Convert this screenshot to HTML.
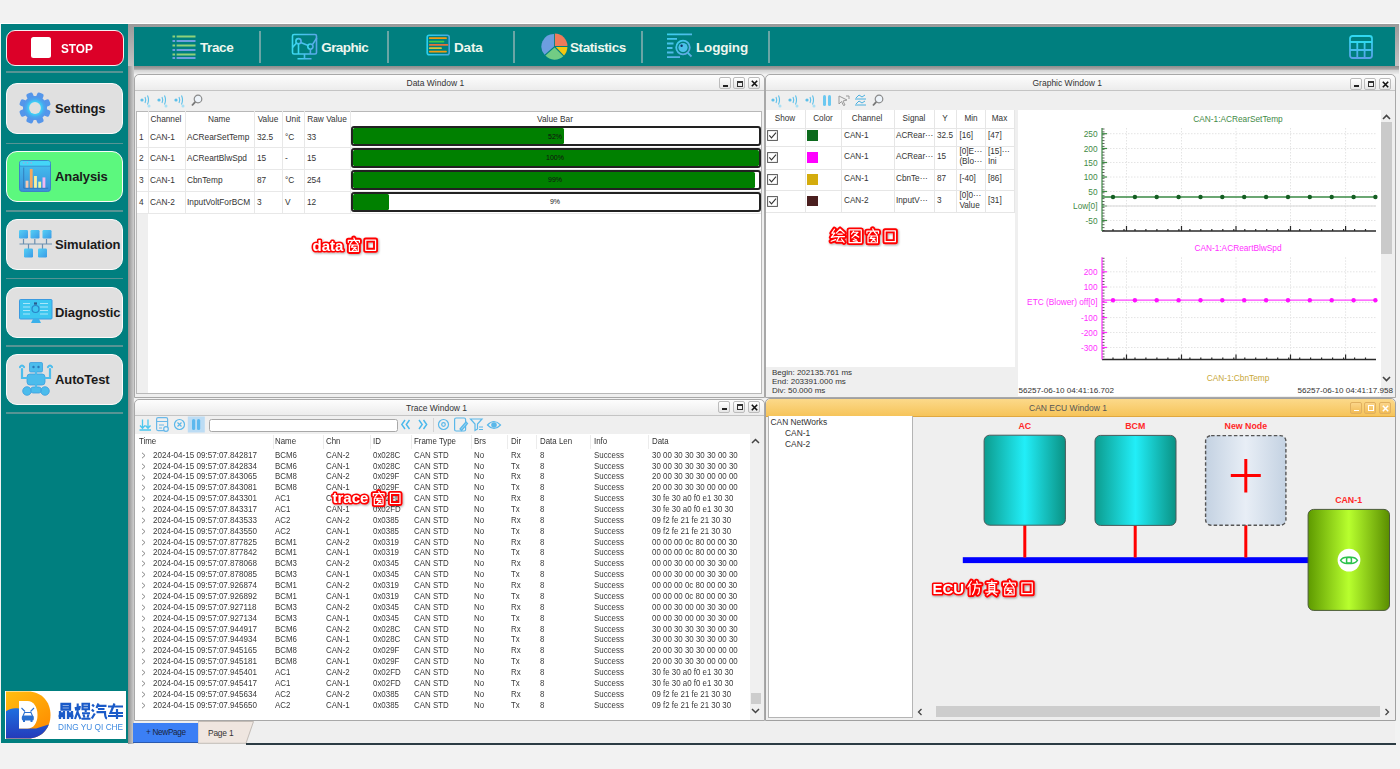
<!DOCTYPE html>
<html><head><meta charset="utf-8">
<style>
*{box-sizing:border-box;margin:0;padding:0}
html,body{width:1400px;height:769px;overflow:hidden;background:#f2f2f2;font-family:"Liberation Sans",sans-serif;position:relative}
.a{position:absolute}
.t{position:absolute;white-space:nowrap;line-height:1}
/* sidebar */
#side{left:1px;top:24px;width:127px;height:719px;background:#007f7f}
.sep{position:absolute;left:6px;width:117px;height:1.6px;background:#579494}
.sbtn{position:absolute;left:6px;width:117px;height:51px;border-radius:11px;background:#e0e0e0;border:1.5px solid #fbfbfb}
.sbtn .lbl{position:absolute;left:48px;top:17px;font-size:13px;font-weight:bold;color:#1a1a1a;letter-spacing:-0.1px}
/* toolbar */
#tbshadow{left:128px;top:24px;width:1271px;height:47px;background:linear-gradient(#9a9a9a,#c8c8c8)}
#tb{left:134px;top:27px;width:1261px;height:39px;background:#007f7f}
.tsep{position:absolute;top:4px;width:2px;height:32px;background:#6aa5a5}
.tl{position:absolute;top:13px;font-size:13.5px;font-weight:bold;color:#eef6ee}
/* windows */
.win{position:absolute;background:#efefef;border:1px solid #a8a8a8;border-radius:5px 5px 0 0}
.ttl{position:absolute;left:0;top:0;right:0;height:16px;background:linear-gradient(#fdfdfd,#ececec);border-bottom:1px solid #c4c4c4;border-radius:5px 5px 0 0}
.ttx{position:absolute;top:4px;font-size:8.5px;color:#333}
.wb{position:absolute;top:2px;width:12px;height:12px;border:1px solid #bcbcbc;border-radius:2px;background:linear-gradient(#fff,#e6e6e6)}
.g{font-size:8.5px;color:#333}
.sx{transform:scaleX(.85);transform-origin:0 0}
</style></head>
<body>
<!-- white line under top strip -->
<div class="a" style="left:0;top:23px;width:1400px;height:1px;background:#fff"></div>

<!-- SIDEBAR -->
<div id="side" class="a">
  <!-- STOP -->
  <div class="a" style="left:5px;top:5.5px;width:117.5px;height:36px;border-radius:9px;background:#dc0028;border:1.5px solid #f6f0f0"></div>
  <div class="a" style="left:29.5px;top:13px;width:20.5px;height:21px;border-radius:2.5px;background:#fff"></div>
  <div class="t" style="left:60px;top:17.5px;font-size:13.5px;font-weight:bold;color:#fff;transform:scaleX(.87);transform-origin:0 0">STOP</div>
  <div class="sep" style="top:47px;left:5px"></div>
  <div class="sep" style="top:118.5px;left:5px"></div>
  <div class="sep" style="top:186px;left:5px"></div>
  <div class="sep" style="top:253.5px;left:5px"></div>
  <div class="sep" style="top:321px;left:5px"></div>
  <div class="sep" style="top:388px;left:5px"></div>

  <!-- Settings -->
  <div class="sbtn" style="top:59px;left:5px">
    <svg class="a" style="left:10.5px;top:7px" width="34" height="34" viewBox="0 0 34 34">
      <defs><radialGradient id="gg" cx="50%" cy="50%" r="50%"><stop offset="0.42" stop-color="#38e2fa"/><stop offset="0.75" stop-color="#4aa6ee"/><stop offset="1" stop-color="#5294ea"/></radialGradient></defs>
      <g fill="#5596ea" transform="rotate(22.5 17 17)">
        <rect x="13.6" y="1" width="6.8" height="32" rx="2"/>
        <rect x="13.6" y="1" width="6.8" height="32" rx="2" transform="rotate(45 17 17)"/>
        <rect x="13.6" y="1" width="6.8" height="32" rx="2" transform="rotate(90 17 17)"/>
        <rect x="13.6" y="1" width="6.8" height="32" rx="2" transform="rotate(135 17 17)"/>
      </g>
      <circle cx="17" cy="17" r="12" fill="url(#gg)"/>
      <circle cx="17" cy="17" r="5.9" fill="#e0e0e0"/>
    </svg>
    <div class="lbl" style="top:17px">Settings</div>
  </div>

  <!-- Analysis -->
  <div class="sbtn" style="top:127px;left:5px;background:#5cf87e">
    <svg class="a" style="left:12px;top:7.5px" width="32" height="32" viewBox="0 0 34 34">
      <defs><linearGradient id="ag" x1="0" y1="0" x2="0" y2="1"><stop offset="0" stop-color="#45c4f2"/><stop offset="1" stop-color="#3a8fd8"/></linearGradient></defs>
      <rect x="0.5" y="0.5" width="33" height="33" rx="3" fill="url(#ag)" stroke="#3a7fc8" stroke-width="1"/>
      <rect x="1" y="1" width="32" height="5.5" rx="2" fill="#44d6f8"/><rect x="1" y="6" width="32" height="1.2" fill="#3a9ad8"/>
      <circle cx="5" cy="3" r="0.9" fill="#9ad"/><circle cx="9" cy="3" r="0.9" fill="#9ad"/><circle cx="13" cy="3" r="0.9" fill="#9ad"/>
      <path d="M5 8 V30 H31" stroke="#2e6fb0" stroke-width="0.8" fill="none"/>
      <rect x="7" y="22" width="3" height="7.5" fill="#f7c9b0"/>
      <rect x="11.5" y="9.5" width="3" height="20" fill="#f5a860"/>
      <rect x="16" y="17" width="3" height="12.5" fill="#f6f0a0"/>
      <rect x="20.5" y="23" width="3" height="6.5" fill="#e8f7a0"/>
      <rect x="25" y="18.5" width="3" height="11" fill="#f0b8f0"/>
    </svg>
    <div class="lbl" style="top:17px">Analysis</div>
  </div>

  <!-- Simulation -->
  <div class="sbtn" style="top:194.5px;left:5px">
    <svg class="a" style="left:12px;top:10px" width="34" height="30" viewBox="0 0 34 30">
      <defs><linearGradient id="sg" x1="0" y1="0" x2="1" y2="1"><stop offset="0" stop-color="#55d0f5"/><stop offset="1" stop-color="#3a9ae6"/></linearGradient></defs>
      <g stroke="#6a8fb0" stroke-width="1.2" fill="none">
        <path d="M0.5 14 H33"/>
        <path d="M4.5 9 V14 M15.8 9 V14 M27.5 9 V14 M9.5 14 V19 M23.5 14 V19"/>
      </g>
      <g fill="url(#sg)">
        <rect x="0" y="0" width="9" height="8.5" rx="1.2"/>
        <rect x="11.5" y="0" width="9" height="8.5" rx="1.2"/>
        <rect x="23.5" y="0" width="9" height="8.5" rx="1.2"/>
        <rect x="5" y="18.5" width="9" height="9" rx="1.2"/>
        <rect x="19" y="18.5" width="9" height="9" rx="1.2"/>
      </g>
    </svg>
    <div class="lbl" style="top:17px">Simulation</div>
  </div>

  <!-- Diagnostic -->
  <div class="sbtn" style="top:262.5px;left:5px">
    <svg class="a" style="left:12px;top:11px" width="34" height="26" viewBox="0 0 34 26">
      <rect x="0.5" y="0.5" width="32.5" height="19.5" rx="1" fill="#3cc6f0" stroke="#3a9ae0" stroke-width="1"/>
      <g stroke="#a8e6fa" stroke-width="1.2">
        <path d="M4 4.5 H11 M4 8 H11 M4 11.5 H11 M4 15 H11 M21 4.5 H29 M21 8 H29 M21 11.5 H29 M21 15 H29"/>
      </g>
      <circle cx="16.5" cy="10" r="3.5" fill="none" stroke="#2a86c8" stroke-width="1.2"/>
      <path d="M15 4 h3 M15 5 h3" stroke="#225" stroke-width="0.8"/>
      <path d="M14 20 L12 24 H22 L20 20 Z" fill="#3ab0ea"/>
    </svg>
    <div class="lbl" style="top:17px">Diagnostic</div>
  </div>

  <!-- AutoTest -->
  <div class="sbtn" style="top:330px;left:5px">
    <svg class="a" style="left:12px;top:7px" width="34" height="35" viewBox="0 0 34 35">
      <g fill="#4cbcec" stroke="#3a9ee0" stroke-width="0.8">
        <rect x="10.5" y="0.5" width="13" height="9.5" rx="1.2"/>
        <rect x="8" y="12" width="18" height="11" rx="3"/>
        <circle cx="8" cy="29" r="4.3"/>
        <circle cx="26" cy="29" r="4.3"/>
        <rect x="12" y="25" width="10" height="6" rx="2"/>
      </g>
      <g stroke="#4cbcec" stroke-width="2.2" fill="none" stroke-linecap="round">
        <path d="M8 16 L3 16 L3 7"/><path d="M26 16 L31 16 L31 7"/>
        <path d="M1 5 Q3 2 5 5"/><path d="M29 5 Q31 2 33 5"/>
        <path d="M17 10 V12"/><path d="M17 23 V25"/>
      </g>
      <circle cx="14.5" cy="5" r="1.2" fill="#2a78b8"/><circle cx="19.5" cy="5" r="1.2" fill="#2a78b8"/>
    </svg>
    <div class="lbl" style="top:17px">AutoTest</div>
  </div>

  <!-- Logo -->
  <svg class="a" style="left:4px;top:667px" width="121" height="48" viewBox="5 691 121 48">
    <defs>
      <linearGradient id="lo" x1="0" y1="0" x2="0.7" y2="1"><stop offset="0" stop-color="#ffbe10"/><stop offset="1" stop-color="#ff8c00"/></linearGradient>
      <linearGradient id="lb" x1="0" y1="0" x2="0" y2="1"><stop offset="0" stop-color="#1f6fe0"/><stop offset="1" stop-color="#2438b8"/></linearGradient>
    </defs>
    <rect x="5" y="691" width="121" height="48" fill="#fff"/>
    <path d="M6 691.5 H28 C41 691.5 50.5 701 50.5 715 C50.5 729 41 738.5 28 738.5 H6 Z" fill="url(#lo)"/>
    <clipPath id="dclip"><path d="M6 691.5 H28 C41 691.5 50.5 701 50.5 715 C50.5 729 41 738.5 28 738.5 H6 Z"/></clipPath><path clip-path="url(#dclip)" d="M5 739 V712 C9 708.5 14 707.5 19 708.5 V728.6 H36 L52 723.5 V740 Z" fill="url(#lb)"/>
    <path d="M19 701 H27.5 C33.5 701 37.5 707 37.5 715 C37.5 723 33.5 728.6 27.5 728.6 H19 Z" fill="#fff"/>
    <g stroke="#2a70d0" stroke-width="1.1" fill="none">
      <path d="M21.5 708 L25 711.5 M34 708 L30.5 711.5"/>
      <path d="M23 716 L24.5 712.5 H31 L32.5 716"/>
    </g>
    <rect x="21.8" y="715.5" width="12" height="5" rx="1.5" fill="#2a70d0"/>
    <rect x="23" y="720" width="2" height="2" fill="#2a70d0"/><rect x="30.5" y="720" width="2" height="2" fill="#2a70d0"/>
    <g stroke="#1a5ac8" stroke-width="2.3" fill="none" transform="translate(58,703) scale(1)">
      <path d="M3.5 0.8 H12 V6.5 H3.5 Z M3.5 3.6 H12 M2 8 V16 M2 10.5 H6 M6 8 V16 M14 8 V16 M10 10.5 H14 M10 8 V16 M0.5 13 H6 M10 13 H15.5"/>
    </g>
    <g stroke="#1a5ac8" stroke-width="2.1" fill="none" transform="translate(74.5,703)">
      <path d="M1 4 L1.8 7.5 M5.5 3 L4.5 7 M3.2 0.5 V8 L0.5 16 M3.2 9.5 L6 16 M8 0.8 H14.5 V6.2 H8 Z M8 3.5 H14.5 M11.2 7 V9 M7.5 10.2 H15.5 M9 11.5 L10 14.5 M14 11.5 L13 14.5 M7 15.8 H16"/>
    </g>
    <g stroke="#1a5ac8" stroke-width="2.2" fill="none" transform="translate(91,703)">
      <path d="M1.2 1.5 L3 3.5 M0.8 6.5 L2.8 8.5 M0.8 15.5 L3.8 10.5 M7.5 0.5 L5.5 5 M7 2.8 H15.5 M7 6 H13.5 M5.5 9.2 H14 Q14 15 16 15.5"/>
    </g>
    <g stroke="#1a5ac8" stroke-width="2.2" fill="none" transform="translate(107.5,703)">
      <path d="M0.5 3.5 H15.5 M7 0.5 L3 10 H15.5 M9.5 6 V16 M0.5 13 H15.5"/>
    </g>
  </svg>
  <div class="t" style="left:57px;top:698.5px;font-size:9.2px;color:#3f8ae0;transform:scaleX(.9);transform-origin:0 0">DING YU QI CHE</div>
</div>

<!-- TOOLBAR -->
<div id="tbshadow" class="a"></div>
<div id="tb" class="a">
  <div class="tsep" style="left:125px"></div>
  <div class="tsep" style="left:253px"></div>
  <div class="tsep" style="left:379px"></div>
  <div class="tsep" style="left:507px"></div>
  <div class="tsep" style="left:634px"></div>
  <!-- trace icon -->
  <svg class="a" style="left:38px;top:8px" width="24" height="24" viewBox="0 0 24 24">
    <g stroke-width="2">
      <path d="M0.5 1.4 h2.6 M4.6 1.4 H23.5" stroke="#8fd27a"/>
      <path d="M0.5 6 h2.6 M4.6 6 H23.5" stroke="#6f9fe0"/>
      <path d="M0.5 10.6 h2.6 M4.6 10.6 H23.5" stroke="#8fd27a"/>
      <path d="M0.5 15.1 h2.6 M4.6 15.1 H23.5" stroke="#6f9fe0"/>
      <path d="M0.5 19.6 h2.6 M4.6 19.6 H23.5" stroke="#8fd27a"/>
      <path d="M0.5 24.1 h2.6 M4.6 24.1 H23.5" stroke="#6f9fe0" transform="translate(0,-1)"/>
    </g>
  </svg>
  <div class="tl" style="left:66px;letter-spacing:-0.4px">Trace</div>
  <!-- graphic icon -->
  <svg class="a" style="left:157px;top:6px" width="27" height="27" viewBox="0 0 27 27">
    <defs><linearGradient id="gi" x1="0" y1="0" x2="1" y2="0"><stop offset="0" stop-color="#3ad8f0"/><stop offset="1" stop-color="#5aa8e8"/></linearGradient></defs>
    <g stroke="url(#gi)" stroke-width="1.6" fill="none">
      <rect x="1.5" y="1.5" width="24" height="19.5" rx="1.5"/>
      <path d="M13.5 21 V25.5 M6.5 25.8 H20.5"/>
      <path d="M1.5 14.4 L5.6 10 M9.6 9.6 L17.2 12.6 M21.4 11.6 L25.8 5"/>
      <circle cx="7.5" cy="8.2" r="2.6"/>
      <circle cx="19.4" cy="13.6" r="2.6"/>
      <path d="M7.5 10.8 V21 M19.4 16.2 V21"/>
    </g>
  </svg>
  <div class="tl" style="left:187.3px;letter-spacing:-0.6px">Graphic</div>
  <!-- data icon -->
  <svg class="a" style="left:292px;top:7px" width="25" height="27" viewBox="0 0 25 27">
    <defs><linearGradient id="di" x1="0" y1="0" x2="1" y2="0"><stop offset="0" stop-color="#2ad0f0"/><stop offset="1" stop-color="#4aa8e0"/></linearGradient></defs>
    <rect x="1.2" y="1.2" width="22" height="19.5" rx="2" fill="none" stroke="url(#di)" stroke-width="1.6"/>
    <path d="M1 24 H24" stroke="url(#di)" stroke-width="1.8"/>
    <g stroke-width="1.8" stroke-linecap="round">
      <path d="M3.8 4.2 H20" stroke="#f29a10"/>
      <path d="M3.8 7.6 H17.5" stroke="#42c84a"/>
      <path d="M3.8 10.9 H21.5" stroke="#e8703a"/>
      <path d="M3.8 14.2 H15" stroke="#d8c43a"/>
      <path d="M3.8 17.6 H20" stroke="#f29a10"/>
    </g>
  </svg>
  <div class="tl" style="left:320px;letter-spacing:-0.15px">Data</div>
  <!-- statistics pie -->
  <svg class="a" style="left:407px;top:6px" width="27" height="27" viewBox="0 0 27 27">
    <path d="M13 13.5 L13 1 A12.5 12.5 0 0 0 3.6 21.8 Z" fill="#6c9ee0"/>
    <path d="M13.9 13 L13.9 0.5 A12.5 12.5 0 0 1 26.4 13 Z" fill="#f07a5a"/>
    <path d="M14.8 14 L26.4 14 A12.5 12.5 0 0 1 23 22.4 Z" fill="#f5c810"/>
    <path d="M13.6 14.5 L22.3 23.2 A12.5 12.5 0 0 1 4.4 22.6 Z" fill="#72cc84"/>
  </svg>
  <div class="tl" style="left:436px;letter-spacing:-0.42px">Statistics</div>
  <!-- logging icon -->
  <svg class="a" style="left:532px;top:6px" width="28" height="27" viewBox="0 0 28 27">
    <defs><linearGradient id="li" x1="0" y1="0" x2="1" y2="1"><stop offset="0" stop-color="#3ad0f0"/><stop offset="1" stop-color="#6aa0e0"/></linearGradient></defs>
    <g stroke="url(#li)" stroke-width="1.8" fill="none">
      <path d="M1 1.3 H26 M1 5.8 H11 M1 10.5 H7.5 M1 15 H6.5 M1 19.5 H7.5 M1 24.2 H14"/>
      <circle cx="17" cy="14.5" r="6.8"/>
      <path d="M21.8 19.8 L25.5 23.5"/>
    </g>
    <circle cx="17" cy="14.5" r="4.6" fill="#4cc0ea"/>
    <circle cx="15.6" cy="12.8" r="1.2" fill="#136"/>
  </svg>
  <div class="tl" style="left:562px;letter-spacing:-0.18px">Logging</div>
  <!-- table icon right -->
  <svg class="a" style="left:1215px;top:8px" width="24" height="24" viewBox="0 0 24 24">
    <defs><linearGradient id="ti" x1="0" y1="0" x2="0" y2="1"><stop offset="0" stop-color="#30d8f0"/><stop offset="1" stop-color="#5aa0e8"/></linearGradient></defs>
    <g stroke="url(#ti)" stroke-width="1.8" fill="none">
      <rect x="1" y="1" width="22" height="22" rx="2.5"/>
      <path d="M1 7 H23 M1 15 H23 M8.3 7 V23 M15.6 7 V23"/>
    </g>
  </svg>
</div>

<!-- gap shadow between sidebar and windows -->
<div class="a" style="left:128px;top:66px;width:6px;height:678px;background:linear-gradient(90deg,#8f8f8f,#cfcfcf)"></div>
<div class="a" style="left:134px;top:66px;width:1265px;height:8px;background:linear-gradient(#8c8c8c 0%,#a8a8a8 40%,#d4d4d4 55%,#ececec 100%)"></div>

<!-- DATA WINDOW -->
<div class="win" style="left:133.5px;top:74px;width:631px;height:323.5px">
  <div class="ttl"></div>
  <div class="t g" style="left:272px;top:4px">Data Window 1</div>
  <div class="wb" style="left:584px"><div class="a" style="left:3px;top:6.5px;width:5px;height:2px;background:#222"></div></div>
  <div class="wb" style="left:598.5px"><div class="a" style="left:2.5px;top:2.5px;width:6px;height:6px;border:1.3px solid #333;border-top-width:2px"></div></div>
  <div class="wb" style="left:613px"><svg class="a" style="left:2px;top:2px" width="7" height="7"><path d="M0.8 0.8 L6.2 6.2 M6.2 0.8 L0.8 6.2" stroke="#111" stroke-width="1.6"/></svg></div>
</div>
<svg class="a" style="left:140px;top:94px" width="64" height="14" viewBox="0 0 64 14">
  <g transform="translate(0,0)" fill="none" stroke="#5cc0ea" stroke-width="1.1"><circle cx="2" cy="6" r="1.6" fill="#5cc0ea" stroke="none"/><path d="M5 3 Q6.5 6 5 9 M7.5 1.5 Q9.5 6 7.5 10.5"/><circle cx="9" cy="12" r="1.5" fill="#a8e0f5" stroke="none"/></g>
  <g transform="translate(17,0)" fill="none" stroke="#5cc0ea" stroke-width="1.1"><circle cx="2" cy="6" r="1.6" fill="#5cc0ea" stroke="none"/><path d="M5 3 Q6.5 6 5 9 M7.5 1.5 Q9.5 6 7.5 10.5"/><circle cx="9" cy="12" r="1.5" fill="#a8e0f5" stroke="none"/></g>
  <g transform="translate(34,0)" fill="none" stroke="#5cc0ea" stroke-width="1.1"><circle cx="2" cy="6" r="1.6" fill="#5cc0ea" stroke="none"/><path d="M5 3 Q6.5 6 5 9 M7.5 1.5 Q9.5 6 7.5 10.5"/><circle cx="9" cy="12" r="1.5" fill="#a8e0f5" stroke="none"/></g>
  <g transform="translate(51,0)"><circle cx="7" cy="5" r="3.8" fill="#eef4fa" stroke="#8a8a8a" stroke-width="1.2"/><path d="M4.3 7.8 L1 11.5" stroke="#777" stroke-width="1.8"/></g>
</svg>
<div class="a" style="left:136px;top:110.5px;width:625.5px;height:283px;background:#fff;border:1px solid #b8b8b8"></div>
<div class="a" style="left:137px;top:212.5px;width:10.5px;height:180.5px;background:#efefef"></div>
<div class="a" style="left:147.5px;top:111px;width:1px;height:101.5px;background:#e8e8e8"></div>
<div class="a" style="left:184.5px;top:111px;width:1px;height:101.5px;background:#e8e8e8"></div>
<div class="a" style="left:254px;top:111px;width:1px;height:101.5px;background:#e8e8e8"></div>
<div class="a" style="left:282px;top:111px;width:1px;height:101.5px;background:#e8e8e8"></div>
<div class="a" style="left:304px;top:111px;width:1px;height:101.5px;background:#e8e8e8"></div>
<div class="a" style="left:350px;top:111px;width:1px;height:101.5px;background:#e8e8e8"></div>
<div class="a" style="left:137px;top:147px;width:624px;height:1px;background:#e8e8e8"></div>
<div class="a" style="left:137px;top:169px;width:624px;height:1px;background:#e8e8e8"></div>
<div class="a" style="left:137px;top:191px;width:624px;height:1px;background:#e8e8e8"></div>
<div class="a" style="left:137px;top:212.5px;width:624px;height:1px;background:#e8e8e8"></div>
<div class="t g" style="left:106px;width:120px;text-align:center;top:114.5px;font-size:8.3px">Channel</div>
<div class="t g" style="left:159px;width:120px;text-align:center;top:114.5px;font-size:8.3px">Name</div>
<div class="t g" style="left:208px;width:120px;text-align:center;top:114.5px;font-size:8.3px">Value</div>
<div class="t g" style="left:233px;width:120px;text-align:center;top:114.5px;font-size:8.3px">Unit</div>
<div class="t g" style="left:267px;width:120px;text-align:center;top:114.5px;font-size:8.3px">Raw Value</div>
<div class="t g" style="left:495px;width:120px;text-align:center;top:114.5px;font-size:8.3px">Value Bar</div>
<div class="t g" style="left:139px;top:132.5px;font-size:8.3px">1</div>
<div class="t g" style="left:150px;top:132.5px;font-size:8.3px">CAN-1</div>
<div class="t g" style="left:187px;top:132.5px;font-size:8.3px">ACRearSetTemp</div>
<div class="t g" style="left:257px;top:132.5px;font-size:8.3px">32.5</div>
<div class="t g" style="left:285px;top:132.5px;font-size:8.3px">°C</div>
<div class="t g" style="left:307px;top:132.5px;font-size:8.3px">33</div>
<div class="a" style="left:350.5px;top:126.4px;width:410px;height:20px;border:2px solid #222;border-radius:3px;background:#fff;overflow:hidden"><div class="a" style="left:0;top:0;bottom:0;width:211.5px;background:#008000;border-radius:1.5px"></div></div>
<div class="t" style="left:505px;width:100px;text-align:center;top:133.0px;font-size:7px;color:#111">52%</div>
<div class="t g" style="left:139px;top:153.5px;font-size:8.3px">2</div>
<div class="t g" style="left:150px;top:153.5px;font-size:8.3px">CAN-1</div>
<div class="t g" style="left:187px;top:153.5px;font-size:8.3px">ACReartBlwSpd</div>
<div class="t g" style="left:257px;top:153.5px;font-size:8.3px">15</div>
<div class="t g" style="left:285px;top:153.5px;font-size:8.3px">-</div>
<div class="t g" style="left:307px;top:153.5px;font-size:8.3px">15</div>
<div class="a" style="left:350.5px;top:148.1px;width:410px;height:20px;border:2px solid #222;border-radius:3px;background:#fff;overflow:hidden"><div class="a" style="left:0;top:0;bottom:0;width:100%;background:#008000;border-radius:1.5px"></div></div>
<div class="t" style="left:505px;width:100px;text-align:center;top:154.0px;font-size:7px;color:#111">100%</div>
<div class="t g" style="left:139px;top:175.5px;font-size:8.3px">3</div>
<div class="t g" style="left:150px;top:175.5px;font-size:8.3px">CAN-1</div>
<div class="t g" style="left:187px;top:175.5px;font-size:8.3px">CbnTemp</div>
<div class="t g" style="left:257px;top:175.5px;font-size:8.3px">87</div>
<div class="t g" style="left:285px;top:175.5px;font-size:8.3px">°C</div>
<div class="t g" style="left:307px;top:175.5px;font-size:8.3px">254</div>
<div class="a" style="left:350.5px;top:170px;width:410px;height:20px;border:2px solid #222;border-radius:3px;background:#fff;overflow:hidden"><div class="a" style="left:0;top:0;bottom:0;width:402.7px;background:#008000;border-radius:1.5px"></div></div>
<div class="t" style="left:505px;width:100px;text-align:center;top:176.0px;font-size:7px;color:#111">99%</div>
<div class="t g" style="left:139px;top:197.5px;font-size:8.3px">4</div>
<div class="t g" style="left:150px;top:197.5px;font-size:8.3px">CAN-2</div>
<div class="t g" style="left:187px;top:197.5px;font-size:8.3px">InputVoltForBCM</div>
<div class="t g" style="left:257px;top:197.5px;font-size:8.3px">3</div>
<div class="t g" style="left:285px;top:197.5px;font-size:8.3px">V</div>
<div class="t g" style="left:307px;top:197.5px;font-size:8.3px">12</div>
<div class="a" style="left:350.5px;top:192px;width:410px;height:20px;border:2px solid #222;border-radius:3px;background:#fff;overflow:hidden"><div class="a" style="left:0;top:0;bottom:0;width:36.6px;background:#008000;border-radius:1.5px"></div></div>
<div class="t" style="left:505px;width:100px;text-align:center;top:198.0px;font-size:7px;color:#111">9%</div>
<!-- GRAPHIC WINDOW -->
<div class="win" style="left:764.5px;top:74px;width:631px;height:323.5px">
  <div class="ttl"></div>
  <div class="t g" style="left:267px;top:4px">Graphic Window 1</div>
  <div class="wb" style="left:584px;top:2.5px"><div class="a" style="left:3px;top:6.5px;width:5px;height:2px;background:#222"></div></div>
  <div class="wb" style="left:598.5px;top:2.5px"><div class="a" style="left:2.5px;top:2.5px;width:6px;height:6px;border:1.3px solid #333;border-top-width:2px"></div></div>
  <div class="wb" style="left:613px;top:2.5px"><svg class="a" style="left:2px;top:2px" width="7" height="7"><path d="M0.8 0.8 L6.2 6.2 M6.2 0.8 L0.8 6.2" stroke="#111" stroke-width="1.6"/></svg></div>
</div>
<svg class="a" style="left:771px;top:94px" width="115" height="14" viewBox="0 0 115 14">
  <g transform="translate(0,0)" fill="none" stroke="#5cc0ea" stroke-width="1.1"><circle cx="2" cy="6" r="1.6" fill="#5cc0ea" stroke="none"/><path d="M5 3 Q6.5 6 5 9 M7.5 1.5 Q9.5 6 7.5 10.5"/><circle cx="9" cy="12" r="1.5" fill="#a8e0f5" stroke="none"/></g>
  <g transform="translate(17,0)" fill="none" stroke="#5cc0ea" stroke-width="1.1"><circle cx="2" cy="6" r="1.6" fill="#5cc0ea" stroke="none"/><path d="M5 3 Q6.5 6 5 9 M7.5 1.5 Q9.5 6 7.5 10.5"/><circle cx="9" cy="12" r="1.5" fill="#a8e0f5" stroke="none"/></g>
  <g transform="translate(34,0)" fill="none" stroke="#5cc0ea" stroke-width="1.1"><circle cx="2" cy="6" r="1.6" fill="#5cc0ea" stroke="none"/><path d="M5 3 Q6.5 6 5 9 M7.5 1.5 Q9.5 6 7.5 10.5"/><circle cx="9" cy="12" r="1.5" fill="#a8e0f5" stroke="none"/></g>
  <g transform="translate(52,1)" fill="#6cc8f0"><rect x="0" y="0" width="3" height="11" rx="1.5"/><rect x="5" y="0" width="3" height="11" rx="1.5"/></g>
  <g transform="translate(67,1)" fill="none" stroke="#999" stroke-width="1"><path d="M1 1 L9 5 L5 6 L7 10 L5.5 10.5 L3.5 6.5 L1 9 Z"/><path d="M8 1 h3 v3"/></g>
  <g transform="translate(84,0)" fill="none" stroke="#4ab0e0" stroke-width="1"><path d="M0 5 h11 M0 11 h11 M1 4 l3 -3 l3 2 l3 -2 M1 10 l3 -3 l3 2 l3 -2"/></g>
  <g transform="translate(101,0)"><circle cx="7" cy="5" r="3.8" fill="#eef4fa" stroke="#8a8a8a" stroke-width="1.2"/><path d="M4.3 7.8 L1 11.5" stroke="#777" stroke-width="1.8"/></g>
</svg>
<div class="a" style="left:765.5px;top:110px;width:249.5px;height:256.5px;background:#fff"></div>
<div class="a" style="left:805.3px;top:110px;width:1px;height:102px;background:#e6e6e6"></div>
<div class="a" style="left:841px;top:110px;width:1px;height:102px;background:#e6e6e6"></div>
<div class="a" style="left:893.6px;top:110px;width:1px;height:102px;background:#e6e6e6"></div>
<div class="a" style="left:934px;top:110px;width:1px;height:102px;background:#e6e6e6"></div>
<div class="a" style="left:956px;top:110px;width:1px;height:102px;background:#e6e6e6"></div>
<div class="a" style="left:985.3px;top:110px;width:1px;height:102px;background:#e6e6e6"></div>
<div class="a" style="left:1013.6px;top:110px;width:1px;height:102px;background:#e6e6e6"></div>
<div class="a" style="left:765.5px;top:127.5px;width:249px;height:1px;background:#e6e6e6"></div>
<div class="a" style="left:765.5px;top:146px;width:249px;height:1px;background:#e6e6e6"></div>
<div class="a" style="left:765.5px;top:168.5px;width:249px;height:1px;background:#e6e6e6"></div>
<div class="a" style="left:765.5px;top:190px;width:249px;height:1px;background:#e6e6e6"></div>
<div class="a" style="left:765.5px;top:212px;width:249px;height:1px;background:#e6e6e6"></div>
<div class="t g" style="left:745px;width:80px;text-align:center;top:114.5px;font-size:8.2px">Show</div>
<div class="t g" style="left:783px;width:80px;text-align:center;top:114.5px;font-size:8.2px">Color</div>
<div class="t g" style="left:827px;width:80px;text-align:center;top:114.5px;font-size:8.2px">Channel</div>
<div class="t g" style="left:874px;width:80px;text-align:center;top:114.5px;font-size:8.2px">Signal</div>
<div class="t g" style="left:905px;width:80px;text-align:center;top:114.5px;font-size:8.2px">Y</div>
<div class="t g" style="left:931px;width:80px;text-align:center;top:114.5px;font-size:8.2px">Min</div>
<div class="t g" style="left:959.5px;width:80px;text-align:center;top:114.5px;font-size:8.2px">Max</div>
<svg class="a" style="left:767px;top:130.2px" width="11" height="11" viewBox="0 0 11 11"><rect x="0.6" y="0.6" width="9.8" height="9.8" fill="#fff" stroke="#555" stroke-width="1"/><path d="M2.3 5.3 L4.5 7.8 L9 2.6" stroke="#333" stroke-width="1.1" fill="none"/></svg>
<div class="a" style="left:807.4px;top:130.39999999999998px;width:11px;height:10.7px;background:#0b6a1c"></div>
<div class="t g" style="left:844px;top:131.7px;font-size:8.2px">CAN-1</div>
<div class="t g" style="left:896px;top:131.7px;font-size:8.2px">ACRear···</div>
<div class="t g" style="left:937px;top:131.7px;font-size:8.2px">32.5</div>
<div class="t g" style="left:959.4px;top:131.7px;font-size:8.2px">[16]</div>
<div class="t g" style="left:988px;top:131.7px;font-size:8.2px">[47]</div>
<svg class="a" style="left:767px;top:151.7px" width="11" height="11" viewBox="0 0 11 11"><rect x="0.6" y="0.6" width="9.8" height="9.8" fill="#fff" stroke="#555" stroke-width="1"/><path d="M2.3 5.3 L4.5 7.8 L9 2.6" stroke="#333" stroke-width="1.1" fill="none"/></svg>
<div class="a" style="left:807.4px;top:151.89999999999998px;width:11px;height:10.7px;background:#ff00ff"></div>
<div class="t g" style="left:844px;top:153.2px;font-size:8.2px">CAN-1</div>
<div class="t g" style="left:896px;top:153.2px;font-size:8.2px">ACRear···</div>
<div class="t g" style="left:937px;top:153.2px;font-size:8.2px">15</div>
<div class="t g" style="left:959.4px;top:148.2px;font-size:8.2px">[0]E···</div>
<div class="t g" style="left:959.4px;top:157.7px;font-size:8.2px">(Blo···</div>
<div class="t g" style="left:988px;top:148.2px;font-size:8.2px">[15]···</div>
<div class="t g" style="left:988px;top:157.7px;font-size:8.2px">Ini</div>
<svg class="a" style="left:767px;top:173.7px" width="11" height="11" viewBox="0 0 11 11"><rect x="0.6" y="0.6" width="9.8" height="9.8" fill="#fff" stroke="#555" stroke-width="1"/><path d="M2.3 5.3 L4.5 7.8 L9 2.6" stroke="#333" stroke-width="1.1" fill="none"/></svg>
<div class="a" style="left:807.4px;top:173.89999999999998px;width:11px;height:10.7px;background:#d4ac0d"></div>
<div class="t g" style="left:844px;top:175.2px;font-size:8.2px">CAN-1</div>
<div class="t g" style="left:896px;top:175.2px;font-size:8.2px">CbnTe···</div>
<div class="t g" style="left:937px;top:175.2px;font-size:8.2px">87</div>
<div class="t g" style="left:959.4px;top:175.2px;font-size:8.2px">[-40]</div>
<div class="t g" style="left:988px;top:175.2px;font-size:8.2px">[86]</div>
<svg class="a" style="left:767px;top:195.6px" width="11" height="11" viewBox="0 0 11 11"><rect x="0.6" y="0.6" width="9.8" height="9.8" fill="#fff" stroke="#555" stroke-width="1"/><path d="M2.3 5.3 L4.5 7.8 L9 2.6" stroke="#333" stroke-width="1.1" fill="none"/></svg>
<div class="a" style="left:807.4px;top:195.79999999999998px;width:11px;height:10.7px;background:#4a1f1f"></div>
<div class="t g" style="left:844px;top:197.1px;font-size:8.2px">CAN-2</div>
<div class="t g" style="left:896px;top:197.1px;font-size:8.2px">InputV···</div>
<div class="t g" style="left:937px;top:197.1px;font-size:8.2px">3</div>
<div class="t g" style="left:959.4px;top:192.1px;font-size:8.2px">[0]0···</div>
<div class="t g" style="left:959.4px;top:201.6px;font-size:8.2px">Value</div>
<div class="t g" style="left:988px;top:197.1px;font-size:8.2px">[31]</div>
<div class="t g" style="left:772px;top:367.5px;font-size:8px;line-height:9.3px">Begin: 202135.761 ms<br>End: 203391.000 ms<br>Div: 50.000 ms</div>
<div class="a" style="left:1017.5px;top:110.2px;width:363.5px;height:286.3px;background:#fff"></div>
<div class="a" style="left:1381px;top:122.4px;width:11px;height:131.3px;background:#cacaca"></div>
<svg class="a" style="left:1382px;top:114px" width="9" height="6"><path d="M1 5 L4.5 1.5 L8 5" stroke="#444" stroke-width="1.6" fill="none"/></svg>
<svg class="a" style="left:1382px;top:376px" width="9" height="6"><path d="M1 1 L4.5 4.5 L8 1" stroke="#444" stroke-width="1.6" fill="none"/></svg>
<svg class="a" style="left:1018px;top:110px" width="377" height="287" viewBox="1018 110 377 287">
<g stroke="#e4e4e4" stroke-width="1" stroke-dasharray="1.5 1.5">
<path d="M1126.5 128 V231"/>
<path d="M1181.5 128 V231"/>
<path d="M1236 128 V231"/>
<path d="M1290.5 128 V231"/>
<path d="M1345.6 128 V231"/>
<path d="M1104 133.7 H1376"/>
<path d="M1104 148.5 H1376"/>
<path d="M1104 162.5 H1376"/>
<path d="M1104 177 H1376"/>
<path d="M1104 191.5 H1376"/>
<path d="M1104 206 H1376"/>
<path d="M1104 220.5 H1376"/>
</g>
<g stroke="#333" stroke-width="0.8">
<path d="M1102 129.0 h2.5"/>
<path d="M1102 131.9 h2.5"/>
<path d="M1102 134.8 h2.5"/>
<path d="M1102 137.7 h2.5"/>
<path d="M1102 140.6 h2.5"/>
<path d="M1102 143.5 h2.5"/>
<path d="M1102 146.4 h2.5"/>
<path d="M1102 149.3 h2.5"/>
<path d="M1102 152.2 h2.5"/>
<path d="M1102 155.1 h2.5"/>
<path d="M1102 158.0 h2.5"/>
<path d="M1102 160.9 h2.5"/>
<path d="M1102 163.8 h2.5"/>
<path d="M1102 166.7 h2.5"/>
<path d="M1102 169.6 h2.5"/>
<path d="M1102 172.5 h2.5"/>
<path d="M1102 175.4 h2.5"/>
<path d="M1102 178.3 h2.5"/>
<path d="M1102 181.2 h2.5"/>
<path d="M1102 184.1 h2.5"/>
<path d="M1102 187.0 h2.5"/>
<path d="M1102 189.9 h2.5"/>
<path d="M1102 192.8 h2.5"/>
<path d="M1102 195.7 h2.5"/>
<path d="M1102 198.6 h2.5"/>
<path d="M1102 201.5 h2.5"/>
<path d="M1102 204.4 h2.5"/>
<path d="M1102 207.3 h2.5"/>
<path d="M1102 210.2 h2.5"/>
<path d="M1102 213.1 h2.5"/>
<path d="M1102 216.0 h2.5"/>
<path d="M1102 218.9 h2.5"/>
<path d="M1102 221.8 h2.5"/>
<path d="M1102 224.7 h2.5"/>
<path d="M1102 227.6 h2.5"/>
<path d="M1102 230.5 h2.5"/>
</g>
<path d="M1102 231 H1376" stroke="#2a2a2a" stroke-width="1.6"/>
<g stroke="#2a2a2a" stroke-width="1.2">
<path d="M1126.5 231 v-5"/>
<path d="M1181.5 231 v-5"/>
<path d="M1236 231 v-5"/>
<path d="M1290.5 231 v-5"/>
<path d="M1345.6 231 v-5"/>
<path d="M1113.0 231 v-2"/>
<path d="M1124.0 231 v-2"/>
<path d="M1135.0 231 v-2"/>
<path d="M1145.9 231 v-2"/>
<path d="M1156.9 231 v-2"/>
<path d="M1167.9 231 v-2"/>
<path d="M1178.9 231 v-2"/>
<path d="M1189.9 231 v-2"/>
<path d="M1200.8 231 v-2"/>
<path d="M1211.8 231 v-2"/>
<path d="M1222.8 231 v-2"/>
<path d="M1233.8 231 v-2"/>
<path d="M1244.8 231 v-2"/>
<path d="M1255.7 231 v-2"/>
<path d="M1266.7 231 v-2"/>
<path d="M1277.7 231 v-2"/>
<path d="M1288.7 231 v-2"/>
<path d="M1299.7 231 v-2"/>
<path d="M1310.6 231 v-2"/>
<path d="M1321.6 231 v-2"/>
<path d="M1332.6 231 v-2"/>
<path d="M1343.6 231 v-2"/>
<path d="M1354.6 231 v-2"/>
<path d="M1365.5 231 v-2"/>
</g>
<path d="M1102 128 V231" stroke="#3f8a46" stroke-width="1.2"/>
<path d="M1102 133.7 h5" stroke="#3f8a46" stroke-width="1.2"/>
<text x="1097.5" y="136.7" text-anchor="end" font-size="8.3" fill="#3f8a46" font-family="Liberation Sans">250</text>
<path d="M1102 148.5 h5" stroke="#3f8a46" stroke-width="1.2"/>
<text x="1097.5" y="151.5" text-anchor="end" font-size="8.3" fill="#3f8a46" font-family="Liberation Sans">200</text>
<path d="M1102 162.5 h5" stroke="#3f8a46" stroke-width="1.2"/>
<text x="1097.5" y="165.5" text-anchor="end" font-size="8.3" fill="#3f8a46" font-family="Liberation Sans">150</text>
<path d="M1102 177 h5" stroke="#3f8a46" stroke-width="1.2"/>
<text x="1097.5" y="180" text-anchor="end" font-size="8.3" fill="#3f8a46" font-family="Liberation Sans">100</text>
<path d="M1102 191.5 h5" stroke="#3f8a46" stroke-width="1.2"/>
<text x="1097.5" y="194.5" text-anchor="end" font-size="8.3" fill="#3f8a46" font-family="Liberation Sans">50</text>
<path d="M1102 206 h5" stroke="#3f8a46" stroke-width="1.2"/>
<text x="1097.5" y="209" text-anchor="end" font-size="8.3" fill="#3f8a46" font-family="Liberation Sans">Low[0]</text>
<path d="M1102 220.5 h5" stroke="#3f8a46" stroke-width="1.2"/>
<text x="1097.5" y="223.5" text-anchor="end" font-size="8.3" fill="#3f8a46" font-family="Liberation Sans">-50</text>
<path d="M1102 197 H1376" stroke="#3a8a44" stroke-width="1.3"/>
<circle cx="1113.0" cy="197" r="2.2" fill="#145e22"/>
<circle cx="1134.9" cy="197" r="2.2" fill="#145e22"/>
<circle cx="1156.7" cy="197" r="2.2" fill="#145e22"/>
<circle cx="1178.6" cy="197" r="2.2" fill="#145e22"/>
<circle cx="1200.5" cy="197" r="2.2" fill="#145e22"/>
<circle cx="1222.3" cy="197" r="2.2" fill="#145e22"/>
<circle cx="1244.2" cy="197" r="2.2" fill="#145e22"/>
<circle cx="1266.1" cy="197" r="2.2" fill="#145e22"/>
<circle cx="1288.0" cy="197" r="2.2" fill="#145e22"/>
<circle cx="1309.8" cy="197" r="2.2" fill="#145e22"/>
<circle cx="1331.7" cy="197" r="2.2" fill="#145e22"/>
<circle cx="1353.6" cy="197" r="2.2" fill="#145e22"/>
<circle cx="1375.4" cy="197" r="2.2" fill="#145e22"/>
<text x="1238" y="121.7" text-anchor="middle" font-size="8.3" fill="#3f8a46" font-family="Liberation Sans">CAN-1:ACRearSetTemp</text>
<path d="M1104 206 H1376" stroke="#d8d8d8" stroke-width="1.2"/>
<g stroke="#e4e4e4" stroke-width="1" stroke-dasharray="1.5 1.5">
<path d="M1126.5 257.3 V359.5"/>
<path d="M1181.5 257.3 V359.5"/>
<path d="M1236 257.3 V359.5"/>
<path d="M1290.5 257.3 V359.5"/>
<path d="M1345.6 257.3 V359.5"/>
<path d="M1104 271.8 H1376"/>
<path d="M1104 287 H1376"/>
<path d="M1104 302.3 H1376"/>
<path d="M1104 317.6 H1376"/>
<path d="M1104 332.5 H1376"/>
<path d="M1104 347.5 H1376"/>
</g>
<g stroke="#333" stroke-width="0.8">
<path d="M1102 258.3 h2.5"/>
<path d="M1102 261.2 h2.5"/>
<path d="M1102 264.1 h2.5"/>
<path d="M1102 267.0 h2.5"/>
<path d="M1102 269.9 h2.5"/>
<path d="M1102 272.8 h2.5"/>
<path d="M1102 275.7 h2.5"/>
<path d="M1102 278.6 h2.5"/>
<path d="M1102 281.5 h2.5"/>
<path d="M1102 284.4 h2.5"/>
<path d="M1102 287.3 h2.5"/>
<path d="M1102 290.2 h2.5"/>
<path d="M1102 293.1 h2.5"/>
<path d="M1102 296.0 h2.5"/>
<path d="M1102 298.9 h2.5"/>
<path d="M1102 301.8 h2.5"/>
<path d="M1102 304.7 h2.5"/>
<path d="M1102 307.6 h2.5"/>
<path d="M1102 310.5 h2.5"/>
<path d="M1102 313.4 h2.5"/>
<path d="M1102 316.3 h2.5"/>
<path d="M1102 319.2 h2.5"/>
<path d="M1102 322.1 h2.5"/>
<path d="M1102 325.0 h2.5"/>
<path d="M1102 327.9 h2.5"/>
<path d="M1102 330.8 h2.5"/>
<path d="M1102 333.7 h2.5"/>
<path d="M1102 336.6 h2.5"/>
<path d="M1102 339.5 h2.5"/>
<path d="M1102 342.4 h2.5"/>
<path d="M1102 345.3 h2.5"/>
<path d="M1102 348.2 h2.5"/>
<path d="M1102 351.1 h2.5"/>
<path d="M1102 354.0 h2.5"/>
<path d="M1102 356.9 h2.5"/>
</g>
<path d="M1102 359.5 H1376" stroke="#2a2a2a" stroke-width="1.6"/>
<g stroke="#2a2a2a" stroke-width="1.2">
<path d="M1126.5 359.5 v-5"/>
<path d="M1181.5 359.5 v-5"/>
<path d="M1236 359.5 v-5"/>
<path d="M1290.5 359.5 v-5"/>
<path d="M1345.6 359.5 v-5"/>
<path d="M1113.0 359.5 v-2"/>
<path d="M1124.0 359.5 v-2"/>
<path d="M1135.0 359.5 v-2"/>
<path d="M1145.9 359.5 v-2"/>
<path d="M1156.9 359.5 v-2"/>
<path d="M1167.9 359.5 v-2"/>
<path d="M1178.9 359.5 v-2"/>
<path d="M1189.9 359.5 v-2"/>
<path d="M1200.8 359.5 v-2"/>
<path d="M1211.8 359.5 v-2"/>
<path d="M1222.8 359.5 v-2"/>
<path d="M1233.8 359.5 v-2"/>
<path d="M1244.8 359.5 v-2"/>
<path d="M1255.7 359.5 v-2"/>
<path d="M1266.7 359.5 v-2"/>
<path d="M1277.7 359.5 v-2"/>
<path d="M1288.7 359.5 v-2"/>
<path d="M1299.7 359.5 v-2"/>
<path d="M1310.6 359.5 v-2"/>
<path d="M1321.6 359.5 v-2"/>
<path d="M1332.6 359.5 v-2"/>
<path d="M1343.6 359.5 v-2"/>
<path d="M1354.6 359.5 v-2"/>
<path d="M1365.5 359.5 v-2"/>
</g>
<path d="M1102 257.3 V359.5" stroke="#ff30ff" stroke-width="1.2"/>
<path d="M1102 271.8 h5" stroke="#ff30ff" stroke-width="1.2"/>
<text x="1097.5" y="274.8" text-anchor="end" font-size="8.3" fill="#ff30ff" font-family="Liberation Sans">200</text>
<path d="M1102 287 h5" stroke="#ff30ff" stroke-width="1.2"/>
<text x="1097.5" y="290" text-anchor="end" font-size="8.3" fill="#ff30ff" font-family="Liberation Sans">100</text>
<path d="M1102 302.3 h5" stroke="#ff30ff" stroke-width="1.2"/>
<text x="1097.5" y="305.3" text-anchor="end" font-size="8.3" fill="#ff30ff" font-family="Liberation Sans">ETC (Blower) off[0]</text>
<path d="M1102 317.6 h5" stroke="#ff30ff" stroke-width="1.2"/>
<text x="1097.5" y="320.6" text-anchor="end" font-size="8.3" fill="#ff30ff" font-family="Liberation Sans">-100</text>
<path d="M1102 332.5 h5" stroke="#ff30ff" stroke-width="1.2"/>
<text x="1097.5" y="335.5" text-anchor="end" font-size="8.3" fill="#ff30ff" font-family="Liberation Sans">-200</text>
<path d="M1102 347.5 h5" stroke="#ff30ff" stroke-width="1.2"/>
<text x="1097.5" y="350.5" text-anchor="end" font-size="8.3" fill="#ff30ff" font-family="Liberation Sans">-300</text>
<path d="M1102 300.2 H1376" stroke="#ff40ff" stroke-width="1.3"/>
<circle cx="1113.0" cy="300.2" r="2.2" fill="#ff10ff"/>
<circle cx="1134.9" cy="300.2" r="2.2" fill="#ff10ff"/>
<circle cx="1156.7" cy="300.2" r="2.2" fill="#ff10ff"/>
<circle cx="1178.6" cy="300.2" r="2.2" fill="#ff10ff"/>
<circle cx="1200.5" cy="300.2" r="2.2" fill="#ff10ff"/>
<circle cx="1222.3" cy="300.2" r="2.2" fill="#ff10ff"/>
<circle cx="1244.2" cy="300.2" r="2.2" fill="#ff10ff"/>
<circle cx="1266.1" cy="300.2" r="2.2" fill="#ff10ff"/>
<circle cx="1288.0" cy="300.2" r="2.2" fill="#ff10ff"/>
<circle cx="1309.8" cy="300.2" r="2.2" fill="#ff10ff"/>
<circle cx="1331.7" cy="300.2" r="2.2" fill="#ff10ff"/>
<circle cx="1353.6" cy="300.2" r="2.2" fill="#ff10ff"/>
<circle cx="1375.4" cy="300.2" r="2.2" fill="#ff10ff"/>
<text x="1238" y="251" text-anchor="middle" font-size="8.3" fill="#ff30ff" font-family="Liberation Sans">CAN-1:ACReartBlwSpd</text>
<text x="1238" y="380.5" text-anchor="middle" font-size="8.3" fill="#c8a838" font-family="Liberation Sans">CAN-1:CbnTemp</text>
<text x="1018.5" y="392.5" font-size="8.1" fill="#333" font-family="Liberation Sans">56257-06-10 04:41:16.702</text>
<text x="1393" y="392.5" text-anchor="end" font-size="8.1" fill="#333" font-family="Liberation Sans">56257-06-10 04:41:17.958</text>
</svg>
<!-- TRACE WINDOW -->
<div class="win" style="left:133.5px;top:399px;width:631px;height:322px">
  <div class="ttl"></div>
  <div class="t g" style="left:271.5px;top:4px">Trace Window 1</div>
  <div class="wb" style="left:583.5px;top:0.5px"><div class="a" style="left:3px;top:6.5px;width:5px;height:2px;background:#222"></div></div>
  <div class="wb" style="left:598.5px;top:0.5px"><div class="a" style="left:2.5px;top:2.5px;width:6px;height:6px;border:1.3px solid #333;border-top-width:2px"></div></div>
  <div class="wb" style="left:613px;top:0.5px"><svg class="a" style="left:2px;top:2px" width="7" height="7"><path d="M0.8 0.8 L6.2 6.2 M6.2 0.8 L0.8 6.2" stroke="#111" stroke-width="1.6"/></svg></div>
</div>
<svg class="a" style="left:138px;top:416px" width="70" height="18" viewBox="0 0 70 18">
  <g stroke="#4ac6ee" stroke-width="1.3" fill="none"><path d="M4.5 3.5 V12 M10 3.5 V12 M2 9.5 L4.5 12.3 L7 9.5 M7.5 9.5 L10 12.3 L12.5 9.5 M1.5 14 H13"/></g>
  <g transform="translate(18,1)" stroke="#6ab8e8" stroke-width="1.2" fill="none"><rect x="0.6" y="0.6" width="11" height="13" rx="1.5"/><path d="M0.6 4.5 H11.6 M3 8 H8 M3 11 H6"/><circle cx="10" cy="12" r="2.3" fill="#eaf4fb"/></g>
  <g transform="translate(36,2)" stroke="#5ab8ea" stroke-width="1.2" fill="none"><circle cx="5.5" cy="6.5" r="5"/><path d="M3.5 4.5 L7.5 8.5 M7.5 4.5 L3.5 8.5"/></g>
  <rect x="49.8" y="0.5" width="17" height="16" fill="#bcdcf4"/>
  <g transform="translate(54,3)" fill="#5cb8ee"><rect x="0" y="0" width="3.2" height="11" rx="1.6"/><rect x="5" y="0" width="3.2" height="11" rx="1.6"/></g>
</svg>
<div class="a" style="left:208.8px;top:418.5px;width:189px;height:13.5px;background:#fff;border:1.5px solid #a8a8a8;border-radius:2.5px"></div>
<svg class="a" style="left:400px;top:417px" width="102" height="16" viewBox="0 0 102 16">
  <g stroke="#48b8ec" stroke-width="1.4" fill="none"><path d="M5 3 L1.8 7.5 L5 12 M9.5 3 L6.3 7.5 L9.5 12"/><path d="M19 3 L22.2 7.5 L19 12 M23.5 3 L26.7 7.5 L23.5 12"/></g>
  <path d="M33.5 1 V15" stroke="#d4d4d4" stroke-width="1"/>
  <g stroke="#5ab8ea" stroke-width="1.2" fill="none"><circle cx="43.5" cy="7.5" r="5"/><circle cx="43.5" cy="7.5" r="1.8"/></g>
  <g transform="translate(54,0)" stroke="#5ab8ea" stroke-width="1.2" fill="none"><rect x="0.6" y="1" width="11" height="13" rx="1.5"/><path d="M6 12 L12 5 L13.5 6.5 L7.5 13.5 Z" fill="#9ad6f2"/></g>
  <g transform="translate(70,1)" stroke="#5ab8ea" stroke-width="1.2" fill="none"><path d="M0.5 1 H12 L7.5 6 V11 L5 12.5 V6 Z"/><path d="M9 9 H13 M9 11.5 H13"/></g>
  <g transform="translate(87,2)" stroke="#5ab8ea" stroke-width="1.2" fill="none"><path d="M0.5 6 Q7 -1 13.5 6 Q7 13 0.5 6 Z"/><circle cx="7" cy="6" r="2.2" fill="#5ab8ea"/></g>
</svg>
<div class="a" style="left:134.5px;top:434px;width:615.5px;height:285.8px;background:#fff"></div>
<div class="a" style="left:750px;top:434px;width:11.5px;height:285.8px;background:#f0f0f0"></div>
<div class="a" style="left:750.5px;top:693.4px;width:10.5px;height:11px;background:#cdcdcd"></div>
<svg class="a" style="left:751px;top:438px" width="9" height="6"><path d="M1 5 L4.5 1.5 L8 5" stroke="#444" stroke-width="1.5" fill="none"/></svg>
<svg class="a" style="left:751px;top:708px" width="9" height="6"><path d="M1 1 L4.5 4.5 L8 1" stroke="#444" stroke-width="1.5" fill="none"/></svg>
<div class="a" style="left:272.5px;top:435px;width:1px;height:14px;background:#ececec"></div>
<div class="a" style="left:323px;top:435px;width:1px;height:14px;background:#ececec"></div>
<div class="a" style="left:369.5px;top:435px;width:1px;height:14px;background:#ececec"></div>
<div class="a" style="left:410.5px;top:435px;width:1px;height:14px;background:#ececec"></div>
<div class="a" style="left:470.6px;top:435px;width:1px;height:14px;background:#ececec"></div>
<div class="a" style="left:507px;top:435px;width:1px;height:14px;background:#ececec"></div>
<div class="a" style="left:536px;top:435px;width:1px;height:14px;background:#ececec"></div>
<div class="a" style="left:590px;top:435px;width:1px;height:14px;background:#ececec"></div>
<div class="a" style="left:648.4px;top:435px;width:1px;height:14px;background:#ececec"></div>
<div class="t g sx" style="left:139px;top:436.5px;font-size:9.3px">Time</div>
<div class="t g sx" style="left:275px;top:436.5px;font-size:9.3px">Name</div>
<div class="t g sx" style="left:326px;top:436.5px;font-size:9.3px">Chn</div>
<div class="t g sx" style="left:372.5px;top:436.5px;font-size:9.3px">ID</div>
<div class="t g sx" style="left:413.75px;top:436.5px;font-size:9.3px">Frame Type</div>
<div class="t g sx" style="left:474px;top:436.5px;font-size:9.3px">Brs</div>
<div class="t g sx" style="left:510.5px;top:436.5px;font-size:9.3px">Dir</div>
<div class="t g sx" style="left:539.5px;top:436.5px;font-size:9.3px">Data Len</div>
<div class="t g sx" style="left:593.7px;top:436.5px;font-size:9.3px">Info</div>
<div class="t g sx" style="left:651.8px;top:436.5px;font-size:9.3px">Data</div>
<div class="a" style="left:0;top:0;font-size:9.3px;color:#3a3a3a">
<svg class="a" style="left:140.5px;top:451.8px" width="5" height="7"><path d="M1 0.8 L4 3.5 L1 6.2" stroke="#777" stroke-width="0.9" fill="none"/></svg>
<div class="t sx" style="left:153px;top:450.7px;transform:scaleX(.867)">2024-04-15 09:57:07.842817</div>
<div class="t sx" style="left:275px;top:450.7px">BCM6</div>
<div class="t sx" style="left:326px;top:450.7px">CAN-2</div>
<div class="t sx" style="left:372.5px;top:450.7px">0x028C</div>
<div class="t sx" style="left:413.5px;top:450.7px">CAN STD</div>
<div class="t sx" style="left:474px;top:450.7px">No</div>
<div class="t sx" style="left:510.5px;top:450.7px">Rx</div>
<div class="t sx" style="left:539.5px;top:450.7px">8</div>
<div class="t sx" style="left:593.5px;top:450.7px">Success</div>
<div class="t sx" style="left:651.5px;top:450.7px">30 00 30 30 30 30 00 30</div>
<svg class="a" style="left:140.5px;top:462.7px" width="5" height="7"><path d="M1 0.8 L4 3.5 L1 6.2" stroke="#777" stroke-width="0.9" fill="none"/></svg>
<div class="t sx" style="left:153px;top:461.6px;transform:scaleX(.867)">2024-04-15 09:57:07.842834</div>
<div class="t sx" style="left:275px;top:461.6px">BCM6</div>
<div class="t sx" style="left:326px;top:461.6px">CAN-1</div>
<div class="t sx" style="left:372.5px;top:461.6px">0x028C</div>
<div class="t sx" style="left:413.5px;top:461.6px">CAN STD</div>
<div class="t sx" style="left:474px;top:461.6px">No</div>
<div class="t sx" style="left:510.5px;top:461.6px">Tx</div>
<div class="t sx" style="left:539.5px;top:461.6px">8</div>
<div class="t sx" style="left:593.5px;top:461.6px">Success</div>
<div class="t sx" style="left:651.5px;top:461.6px">30 00 30 30 30 30 00 30</div>
<svg class="a" style="left:140.5px;top:473.5px" width="5" height="7"><path d="M1 0.8 L4 3.5 L1 6.2" stroke="#777" stroke-width="0.9" fill="none"/></svg>
<div class="t sx" style="left:153px;top:472.4px;transform:scaleX(.867)">2024-04-15 09:57:07.843065</div>
<div class="t sx" style="left:275px;top:472.4px">BCM8</div>
<div class="t sx" style="left:326px;top:472.4px">CAN-2</div>
<div class="t sx" style="left:372.5px;top:472.4px">0x029F</div>
<div class="t sx" style="left:413.5px;top:472.4px">CAN STD</div>
<div class="t sx" style="left:474px;top:472.4px">No</div>
<div class="t sx" style="left:510.5px;top:472.4px">Rx</div>
<div class="t sx" style="left:539.5px;top:472.4px">8</div>
<div class="t sx" style="left:593.5px;top:472.4px">Success</div>
<div class="t sx" style="left:651.5px;top:472.4px">20 00 30 30 30 00 00 00</div>
<svg class="a" style="left:140.5px;top:484.4px" width="5" height="7"><path d="M1 0.8 L4 3.5 L1 6.2" stroke="#777" stroke-width="0.9" fill="none"/></svg>
<div class="t sx" style="left:153px;top:483.3px;transform:scaleX(.867)">2024-04-15 09:57:07.843081</div>
<div class="t sx" style="left:275px;top:483.3px">BCM8</div>
<div class="t sx" style="left:326px;top:483.3px">CAN-1</div>
<div class="t sx" style="left:372.5px;top:483.3px">0x029F</div>
<div class="t sx" style="left:413.5px;top:483.3px">CAN STD</div>
<div class="t sx" style="left:474px;top:483.3px">No</div>
<div class="t sx" style="left:510.5px;top:483.3px">Tx</div>
<div class="t sx" style="left:539.5px;top:483.3px">8</div>
<div class="t sx" style="left:593.5px;top:483.3px">Success</div>
<div class="t sx" style="left:651.5px;top:483.3px">20 00 30 30 30 00 00 00</div>
<svg class="a" style="left:140.5px;top:495.2px" width="5" height="7"><path d="M1 0.8 L4 3.5 L1 6.2" stroke="#777" stroke-width="0.9" fill="none"/></svg>
<div class="t sx" style="left:153px;top:494.1px;transform:scaleX(.867)">2024-04-15 09:57:07.843301</div>
<div class="t sx" style="left:275px;top:494.1px">AC1</div>
<div class="t sx" style="left:326px;top:494.1px">CAN-2</div>
<div class="t sx" style="left:372.5px;top:494.1px">0x02FD</div>
<div class="t sx" style="left:413.5px;top:494.1px">CAN STD</div>
<div class="t sx" style="left:474px;top:494.1px">No</div>
<div class="t sx" style="left:510.5px;top:494.1px">Rx</div>
<div class="t sx" style="left:539.5px;top:494.1px">8</div>
<div class="t sx" style="left:593.5px;top:494.1px">Success</div>
<div class="t sx" style="left:651.5px;top:494.1px">30 fe 30 a0 f0 e1 30 30</div>
<svg class="a" style="left:140.5px;top:506.1px" width="5" height="7"><path d="M1 0.8 L4 3.5 L1 6.2" stroke="#777" stroke-width="0.9" fill="none"/></svg>
<div class="t sx" style="left:153px;top:505.0px;transform:scaleX(.867)">2024-04-15 09:57:07.843317</div>
<div class="t sx" style="left:275px;top:505.0px">AC1</div>
<div class="t sx" style="left:326px;top:505.0px">CAN-1</div>
<div class="t sx" style="left:372.5px;top:505.0px">0x02FD</div>
<div class="t sx" style="left:413.5px;top:505.0px">CAN STD</div>
<div class="t sx" style="left:474px;top:505.0px">No</div>
<div class="t sx" style="left:510.5px;top:505.0px">Tx</div>
<div class="t sx" style="left:539.5px;top:505.0px">8</div>
<div class="t sx" style="left:593.5px;top:505.0px">Success</div>
<div class="t sx" style="left:651.5px;top:505.0px">30 fe 30 a0 f0 e1 30 30</div>
<svg class="a" style="left:140.5px;top:517.0px" width="5" height="7"><path d="M1 0.8 L4 3.5 L1 6.2" stroke="#777" stroke-width="0.9" fill="none"/></svg>
<div class="t sx" style="left:153px;top:515.9px;transform:scaleX(.867)">2024-04-15 09:57:07.843533</div>
<div class="t sx" style="left:275px;top:515.9px">AC2</div>
<div class="t sx" style="left:326px;top:515.9px">CAN-2</div>
<div class="t sx" style="left:372.5px;top:515.9px">0x0385</div>
<div class="t sx" style="left:413.5px;top:515.9px">CAN STD</div>
<div class="t sx" style="left:474px;top:515.9px">No</div>
<div class="t sx" style="left:510.5px;top:515.9px">Rx</div>
<div class="t sx" style="left:539.5px;top:515.9px">8</div>
<div class="t sx" style="left:593.5px;top:515.9px">Success</div>
<div class="t sx" style="left:651.5px;top:515.9px">09 f2 fe 21 fe 21 30 30</div>
<svg class="a" style="left:140.5px;top:527.8px" width="5" height="7"><path d="M1 0.8 L4 3.5 L1 6.2" stroke="#777" stroke-width="0.9" fill="none"/></svg>
<div class="t sx" style="left:153px;top:526.7px;transform:scaleX(.867)">2024-04-15 09:57:07.843550</div>
<div class="t sx" style="left:275px;top:526.7px">AC2</div>
<div class="t sx" style="left:326px;top:526.7px">CAN-1</div>
<div class="t sx" style="left:372.5px;top:526.7px">0x0385</div>
<div class="t sx" style="left:413.5px;top:526.7px">CAN STD</div>
<div class="t sx" style="left:474px;top:526.7px">No</div>
<div class="t sx" style="left:510.5px;top:526.7px">Tx</div>
<div class="t sx" style="left:539.5px;top:526.7px">8</div>
<div class="t sx" style="left:593.5px;top:526.7px">Success</div>
<div class="t sx" style="left:651.5px;top:526.7px">09 f2 fe 21 fe 21 30 30</div>
<svg class="a" style="left:140.5px;top:538.7px" width="5" height="7"><path d="M1 0.8 L4 3.5 L1 6.2" stroke="#777" stroke-width="0.9" fill="none"/></svg>
<div class="t sx" style="left:153px;top:537.6px;transform:scaleX(.867)">2024-04-15 09:57:07.877825</div>
<div class="t sx" style="left:275px;top:537.6px">BCM1</div>
<div class="t sx" style="left:326px;top:537.6px">CAN-2</div>
<div class="t sx" style="left:372.5px;top:537.6px">0x0319</div>
<div class="t sx" style="left:413.5px;top:537.6px">CAN STD</div>
<div class="t sx" style="left:474px;top:537.6px">No</div>
<div class="t sx" style="left:510.5px;top:537.6px">Rx</div>
<div class="t sx" style="left:539.5px;top:537.6px">8</div>
<div class="t sx" style="left:593.5px;top:537.6px">Success</div>
<div class="t sx" style="left:651.5px;top:537.6px">00 00 00 0c 80 00 00 30</div>
<svg class="a" style="left:140.5px;top:549.5px" width="5" height="7"><path d="M1 0.8 L4 3.5 L1 6.2" stroke="#777" stroke-width="0.9" fill="none"/></svg>
<div class="t sx" style="left:153px;top:548.4px;transform:scaleX(.867)">2024-04-15 09:57:07.877842</div>
<div class="t sx" style="left:275px;top:548.4px">BCM1</div>
<div class="t sx" style="left:326px;top:548.4px">CAN-1</div>
<div class="t sx" style="left:372.5px;top:548.4px">0x0319</div>
<div class="t sx" style="left:413.5px;top:548.4px">CAN STD</div>
<div class="t sx" style="left:474px;top:548.4px">No</div>
<div class="t sx" style="left:510.5px;top:548.4px">Tx</div>
<div class="t sx" style="left:539.5px;top:548.4px">8</div>
<div class="t sx" style="left:593.5px;top:548.4px">Success</div>
<div class="t sx" style="left:651.5px;top:548.4px">00 00 00 0c 80 00 00 30</div>
<svg class="a" style="left:140.5px;top:560.4px" width="5" height="7"><path d="M1 0.8 L4 3.5 L1 6.2" stroke="#777" stroke-width="0.9" fill="none"/></svg>
<div class="t sx" style="left:153px;top:559.3px;transform:scaleX(.867)">2024-04-15 09:57:07.878068</div>
<div class="t sx" style="left:275px;top:559.3px">BCM3</div>
<div class="t sx" style="left:326px;top:559.3px">CAN-2</div>
<div class="t sx" style="left:372.5px;top:559.3px">0x0345</div>
<div class="t sx" style="left:413.5px;top:559.3px">CAN STD</div>
<div class="t sx" style="left:474px;top:559.3px">No</div>
<div class="t sx" style="left:510.5px;top:559.3px">Rx</div>
<div class="t sx" style="left:539.5px;top:559.3px">8</div>
<div class="t sx" style="left:593.5px;top:559.3px">Success</div>
<div class="t sx" style="left:651.5px;top:559.3px">00 00 30 00 00 30 30 00</div>
<svg class="a" style="left:140.5px;top:571.3px" width="5" height="7"><path d="M1 0.8 L4 3.5 L1 6.2" stroke="#777" stroke-width="0.9" fill="none"/></svg>
<div class="t sx" style="left:153px;top:570.2px;transform:scaleX(.867)">2024-04-15 09:57:07.878085</div>
<div class="t sx" style="left:275px;top:570.2px">BCM3</div>
<div class="t sx" style="left:326px;top:570.2px">CAN-1</div>
<div class="t sx" style="left:372.5px;top:570.2px">0x0345</div>
<div class="t sx" style="left:413.5px;top:570.2px">CAN STD</div>
<div class="t sx" style="left:474px;top:570.2px">No</div>
<div class="t sx" style="left:510.5px;top:570.2px">Tx</div>
<div class="t sx" style="left:539.5px;top:570.2px">8</div>
<div class="t sx" style="left:593.5px;top:570.2px">Success</div>
<div class="t sx" style="left:651.5px;top:570.2px">00 00 30 00 00 30 30 00</div>
<svg class="a" style="left:140.5px;top:582.1px" width="5" height="7"><path d="M1 0.8 L4 3.5 L1 6.2" stroke="#777" stroke-width="0.9" fill="none"/></svg>
<div class="t sx" style="left:153px;top:581.0px;transform:scaleX(.867)">2024-04-15 09:57:07.926874</div>
<div class="t sx" style="left:275px;top:581.0px">BCM1</div>
<div class="t sx" style="left:326px;top:581.0px">CAN-2</div>
<div class="t sx" style="left:372.5px;top:581.0px">0x0319</div>
<div class="t sx" style="left:413.5px;top:581.0px">CAN STD</div>
<div class="t sx" style="left:474px;top:581.0px">No</div>
<div class="t sx" style="left:510.5px;top:581.0px">Rx</div>
<div class="t sx" style="left:539.5px;top:581.0px">8</div>
<div class="t sx" style="left:593.5px;top:581.0px">Success</div>
<div class="t sx" style="left:651.5px;top:581.0px">00 00 00 0c 80 00 00 30</div>
<svg class="a" style="left:140.5px;top:593.0px" width="5" height="7"><path d="M1 0.8 L4 3.5 L1 6.2" stroke="#777" stroke-width="0.9" fill="none"/></svg>
<div class="t sx" style="left:153px;top:591.9px;transform:scaleX(.867)">2024-04-15 09:57:07.926892</div>
<div class="t sx" style="left:275px;top:591.9px">BCM1</div>
<div class="t sx" style="left:326px;top:591.9px">CAN-1</div>
<div class="t sx" style="left:372.5px;top:591.9px">0x0319</div>
<div class="t sx" style="left:413.5px;top:591.9px">CAN STD</div>
<div class="t sx" style="left:474px;top:591.9px">No</div>
<div class="t sx" style="left:510.5px;top:591.9px">Tx</div>
<div class="t sx" style="left:539.5px;top:591.9px">8</div>
<div class="t sx" style="left:593.5px;top:591.9px">Success</div>
<div class="t sx" style="left:651.5px;top:591.9px">00 00 00 0c 80 00 00 30</div>
<svg class="a" style="left:140.5px;top:603.8px" width="5" height="7"><path d="M1 0.8 L4 3.5 L1 6.2" stroke="#777" stroke-width="0.9" fill="none"/></svg>
<div class="t sx" style="left:153px;top:602.7px;transform:scaleX(.867)">2024-04-15 09:57:07.927118</div>
<div class="t sx" style="left:275px;top:602.7px">BCM3</div>
<div class="t sx" style="left:326px;top:602.7px">CAN-2</div>
<div class="t sx" style="left:372.5px;top:602.7px">0x0345</div>
<div class="t sx" style="left:413.5px;top:602.7px">CAN STD</div>
<div class="t sx" style="left:474px;top:602.7px">No</div>
<div class="t sx" style="left:510.5px;top:602.7px">Rx</div>
<div class="t sx" style="left:539.5px;top:602.7px">8</div>
<div class="t sx" style="left:593.5px;top:602.7px">Success</div>
<div class="t sx" style="left:651.5px;top:602.7px">00 00 30 00 00 30 30 00</div>
<svg class="a" style="left:140.5px;top:614.7px" width="5" height="7"><path d="M1 0.8 L4 3.5 L1 6.2" stroke="#777" stroke-width="0.9" fill="none"/></svg>
<div class="t sx" style="left:153px;top:613.6px;transform:scaleX(.867)">2024-04-15 09:57:07.927134</div>
<div class="t sx" style="left:275px;top:613.6px">BCM3</div>
<div class="t sx" style="left:326px;top:613.6px">CAN-1</div>
<div class="t sx" style="left:372.5px;top:613.6px">0x0345</div>
<div class="t sx" style="left:413.5px;top:613.6px">CAN STD</div>
<div class="t sx" style="left:474px;top:613.6px">No</div>
<div class="t sx" style="left:510.5px;top:613.6px">Tx</div>
<div class="t sx" style="left:539.5px;top:613.6px">8</div>
<div class="t sx" style="left:593.5px;top:613.6px">Success</div>
<div class="t sx" style="left:651.5px;top:613.6px">00 00 30 00 00 30 30 00</div>
<svg class="a" style="left:140.5px;top:625.6px" width="5" height="7"><path d="M1 0.8 L4 3.5 L1 6.2" stroke="#777" stroke-width="0.9" fill="none"/></svg>
<div class="t sx" style="left:153px;top:624.5px;transform:scaleX(.867)">2024-04-15 09:57:07.944917</div>
<div class="t sx" style="left:275px;top:624.5px">BCM6</div>
<div class="t sx" style="left:326px;top:624.5px">CAN-2</div>
<div class="t sx" style="left:372.5px;top:624.5px">0x028C</div>
<div class="t sx" style="left:413.5px;top:624.5px">CAN STD</div>
<div class="t sx" style="left:474px;top:624.5px">No</div>
<div class="t sx" style="left:510.5px;top:624.5px">Rx</div>
<div class="t sx" style="left:539.5px;top:624.5px">8</div>
<div class="t sx" style="left:593.5px;top:624.5px">Success</div>
<div class="t sx" style="left:651.5px;top:624.5px">30 00 30 30 30 30 00 30</div>
<svg class="a" style="left:140.5px;top:636.4px" width="5" height="7"><path d="M1 0.8 L4 3.5 L1 6.2" stroke="#777" stroke-width="0.9" fill="none"/></svg>
<div class="t sx" style="left:153px;top:635.3px;transform:scaleX(.867)">2024-04-15 09:57:07.944934</div>
<div class="t sx" style="left:275px;top:635.3px">BCM6</div>
<div class="t sx" style="left:326px;top:635.3px">CAN-1</div>
<div class="t sx" style="left:372.5px;top:635.3px">0x028C</div>
<div class="t sx" style="left:413.5px;top:635.3px">CAN STD</div>
<div class="t sx" style="left:474px;top:635.3px">No</div>
<div class="t sx" style="left:510.5px;top:635.3px">Tx</div>
<div class="t sx" style="left:539.5px;top:635.3px">8</div>
<div class="t sx" style="left:593.5px;top:635.3px">Success</div>
<div class="t sx" style="left:651.5px;top:635.3px">30 00 30 30 30 30 00 30</div>
<svg class="a" style="left:140.5px;top:647.3px" width="5" height="7"><path d="M1 0.8 L4 3.5 L1 6.2" stroke="#777" stroke-width="0.9" fill="none"/></svg>
<div class="t sx" style="left:153px;top:646.2px;transform:scaleX(.867)">2024-04-15 09:57:07.945165</div>
<div class="t sx" style="left:275px;top:646.2px">BCM8</div>
<div class="t sx" style="left:326px;top:646.2px">CAN-2</div>
<div class="t sx" style="left:372.5px;top:646.2px">0x029F</div>
<div class="t sx" style="left:413.5px;top:646.2px">CAN STD</div>
<div class="t sx" style="left:474px;top:646.2px">No</div>
<div class="t sx" style="left:510.5px;top:646.2px">Rx</div>
<div class="t sx" style="left:539.5px;top:646.2px">8</div>
<div class="t sx" style="left:593.5px;top:646.2px">Success</div>
<div class="t sx" style="left:651.5px;top:646.2px">20 00 30 30 30 00 00 00</div>
<svg class="a" style="left:140.5px;top:658.1px" width="5" height="7"><path d="M1 0.8 L4 3.5 L1 6.2" stroke="#777" stroke-width="0.9" fill="none"/></svg>
<div class="t sx" style="left:153px;top:657.0px;transform:scaleX(.867)">2024-04-15 09:57:07.945181</div>
<div class="t sx" style="left:275px;top:657.0px">BCM8</div>
<div class="t sx" style="left:326px;top:657.0px">CAN-1</div>
<div class="t sx" style="left:372.5px;top:657.0px">0x029F</div>
<div class="t sx" style="left:413.5px;top:657.0px">CAN STD</div>
<div class="t sx" style="left:474px;top:657.0px">No</div>
<div class="t sx" style="left:510.5px;top:657.0px">Tx</div>
<div class="t sx" style="left:539.5px;top:657.0px">8</div>
<div class="t sx" style="left:593.5px;top:657.0px">Success</div>
<div class="t sx" style="left:651.5px;top:657.0px">20 00 30 30 30 00 00 00</div>
<svg class="a" style="left:140.5px;top:669.0px" width="5" height="7"><path d="M1 0.8 L4 3.5 L1 6.2" stroke="#777" stroke-width="0.9" fill="none"/></svg>
<div class="t sx" style="left:153px;top:667.9px;transform:scaleX(.867)">2024-04-15 09:57:07.945401</div>
<div class="t sx" style="left:275px;top:667.9px">AC1</div>
<div class="t sx" style="left:326px;top:667.9px">CAN-2</div>
<div class="t sx" style="left:372.5px;top:667.9px">0x02FD</div>
<div class="t sx" style="left:413.5px;top:667.9px">CAN STD</div>
<div class="t sx" style="left:474px;top:667.9px">No</div>
<div class="t sx" style="left:510.5px;top:667.9px">Rx</div>
<div class="t sx" style="left:539.5px;top:667.9px">8</div>
<div class="t sx" style="left:593.5px;top:667.9px">Success</div>
<div class="t sx" style="left:651.5px;top:667.9px">30 fe 30 a0 f0 e1 30 30</div>
<svg class="a" style="left:140.5px;top:679.9px" width="5" height="7"><path d="M1 0.8 L4 3.5 L1 6.2" stroke="#777" stroke-width="0.9" fill="none"/></svg>
<div class="t sx" style="left:153px;top:678.8px;transform:scaleX(.867)">2024-04-15 09:57:07.945417</div>
<div class="t sx" style="left:275px;top:678.8px">AC1</div>
<div class="t sx" style="left:326px;top:678.8px">CAN-1</div>
<div class="t sx" style="left:372.5px;top:678.8px">0x02FD</div>
<div class="t sx" style="left:413.5px;top:678.8px">CAN STD</div>
<div class="t sx" style="left:474px;top:678.8px">No</div>
<div class="t sx" style="left:510.5px;top:678.8px">Tx</div>
<div class="t sx" style="left:539.5px;top:678.8px">8</div>
<div class="t sx" style="left:593.5px;top:678.8px">Success</div>
<div class="t sx" style="left:651.5px;top:678.8px">30 fe 30 a0 f0 e1 30 30</div>
<svg class="a" style="left:140.5px;top:690.7px" width="5" height="7"><path d="M1 0.8 L4 3.5 L1 6.2" stroke="#777" stroke-width="0.9" fill="none"/></svg>
<div class="t sx" style="left:153px;top:689.6px;transform:scaleX(.867)">2024-04-15 09:57:07.945634</div>
<div class="t sx" style="left:275px;top:689.6px">AC2</div>
<div class="t sx" style="left:326px;top:689.6px">CAN-2</div>
<div class="t sx" style="left:372.5px;top:689.6px">0x0385</div>
<div class="t sx" style="left:413.5px;top:689.6px">CAN STD</div>
<div class="t sx" style="left:474px;top:689.6px">No</div>
<div class="t sx" style="left:510.5px;top:689.6px">Rx</div>
<div class="t sx" style="left:539.5px;top:689.6px">8</div>
<div class="t sx" style="left:593.5px;top:689.6px">Success</div>
<div class="t sx" style="left:651.5px;top:689.6px">09 f2 fe 21 fe 21 30 30</div>
<svg class="a" style="left:140.5px;top:701.6px" width="5" height="7"><path d="M1 0.8 L4 3.5 L1 6.2" stroke="#777" stroke-width="0.9" fill="none"/></svg>
<div class="t sx" style="left:153px;top:700.5px;transform:scaleX(.867)">2024-04-15 09:57:07.945650</div>
<div class="t sx" style="left:275px;top:700.5px">AC2</div>
<div class="t sx" style="left:326px;top:700.5px">CAN-1</div>
<div class="t sx" style="left:372.5px;top:700.5px">0x0385</div>
<div class="t sx" style="left:413.5px;top:700.5px">CAN STD</div>
<div class="t sx" style="left:474px;top:700.5px">No</div>
<div class="t sx" style="left:510.5px;top:700.5px">Tx</div>
<div class="t sx" style="left:539.5px;top:700.5px">8</div>
<div class="t sx" style="left:593.5px;top:700.5px">Success</div>
<div class="t sx" style="left:651.5px;top:700.5px">09 f2 fe 21 fe 21 30 30</div>
</div>
<!-- ECU WINDOW -->
<div class="win" style="left:764.5px;top:398px;width:631px;height:323px;border-color:#a0a0a0">
  <div class="ttl" style="height:17.5px;background:linear-gradient(#fcd98a,#f6c45a);border-bottom:1px solid #e0a840"></div>
  <div class="t g" style="left:263.5px;top:5px;color:#555">CAN ECU Window 1</div>
  <div class="wb" style="left:584.5px;top:2.5px;border-color:#e0b060;background:linear-gradient(#fbd58a,#f2bc55)"><div class="a" style="left:3px;top:7px;width:5px;height:1.5px;background:#fff"></div></div>
  <div class="wb" style="left:598.5px;top:2.5px;border-color:#e0b060;background:linear-gradient(#fbd58a,#f2bc55)"><div class="a" style="left:2.5px;top:2.5px;width:6px;height:6px;border:1.2px solid #fff;border-top-width:1.8px"></div></div>
  <div class="wb" style="left:613px;top:2.5px;border-color:#e0b060;background:linear-gradient(#fbd58a,#f2bc55)"><svg class="a" style="left:2px;top:2px" width="7" height="7"><path d="M0.8 0.8 L6.2 6.2 M6.2 0.8 L0.8 6.2" stroke="#fff" stroke-width="1.5"/></svg></div>
</div>
<div class="a" style="left:767.5px;top:416px;width:145.5px;height:302px;background:#fff;border:1px solid #b4b4b4;border-top:none"></div>
<div class="t g" style="left:770.5px;top:417.5px;font-size:8.4px">CAN NetWorks</div>
<div class="t g" style="left:785px;top:428.5px;font-size:8.4px">CAN-1</div>
<div class="t g" style="left:785px;top:439.5px;font-size:8.4px">CAN-2</div>
<div class="a" style="left:936px;top:706px;width:444px;height:10.8px;background:#cdcdcd"></div>
<svg class="a" style="left:917px;top:708px" width="6" height="8"><path d="M4.5 1 L1.5 4 L4.5 7" stroke="#444" stroke-width="1.3" fill="none"/></svg>
<svg class="a" style="left:1384px;top:708px" width="6" height="8"><path d="M1.5 1 L4.5 4 L1.5 7" stroke="#444" stroke-width="1.3" fill="none"/></svg>
<svg class="a" style="left:914px;top:416px" width="480" height="290" viewBox="914 416 480 290">
<defs>
<linearGradient id="tealg" x1="0" y1="0" x2="1" y2="0"><stop offset="0" stop-color="#0c9c8e"/><stop offset="0.5" stop-color="#22eef8"/><stop offset="1" stop-color="#0a9284"/></linearGradient>
<linearGradient id="greeng" x1="0" y1="0" x2="1" y2="0"><stop offset="0" stop-color="#5e9a00"/><stop offset="0.5" stop-color="#b8ff2e"/><stop offset="1" stop-color="#5a8e00"/></linearGradient>
<linearGradient id="newg" x1="0" y1="0" x2="1" y2="0"><stop offset="0" stop-color="#c4d2e2"/><stop offset="0.5" stop-color="#e8eef6"/><stop offset="1" stop-color="#c4d2e2"/></linearGradient>
</defs>
<rect x="962.8" y="557.2" width="346" height="5.9" fill="#0000ff"/>
<rect x="1023.3" y="525" width="3" height="32.5" fill="#ff0000"/>
<rect x="1133.7" y="525" width="3" height="32.5" fill="#ff0000"/>
<rect x="1244.3" y="525" width="3" height="32.5" fill="#ff0000"/>
<rect x="984.1" y="435.2" width="81.3" height="90" rx="5.5" fill="url(#tealg)" stroke="#4a5a5a" stroke-width="1"/>
<rect x="1095" y="435.4" width="81" height="90" rx="5.5" fill="url(#tealg)" stroke="#4a5a5a" stroke-width="1"/>
<rect x="1205.6" y="435.6" width="80.3" height="89.6" rx="5.5" fill="url(#newg)" stroke="#555" stroke-width="1.4" stroke-dasharray="3.5 2.2"/>
<path d="M1230.8 475.5 H1260.8 M1245.8 459 V492.5" stroke="#ff0000" stroke-width="3"/>
<rect x="1308.1" y="509.4" width="81.4" height="101" rx="5.5" fill="url(#greeng)" stroke="#4a5a3a" stroke-width="1"/>
<circle cx="1349" cy="560.1" r="11.4" fill="#fff"/>
<g stroke="#2cc24c" stroke-width="1.5" fill="none"><path d="M1340.6 560.3 Q1342.5 557.3 1347 557.3 H1351 Q1355.5 557.3 1357.4 560.3 Q1355.5 563.4 1351 563.4 H1347 Q1342.5 563.4 1340.6 560.3 Z"/><rect x="1346.6" y="557.6" width="4.8" height="5.5" rx="1.2"/></g>
<text x="1024.8" y="429.3" text-anchor="middle" font-size="8.8" font-weight="bold" fill="#ff2828" font-family="Liberation Sans">AC</text>
<text x="1135.2" y="429.2" text-anchor="middle" font-size="8.8" font-weight="bold" fill="#ff2828" font-family="Liberation Sans">BCM</text>
<text x="1245.8" y="429.2" text-anchor="middle" font-size="8.8" font-weight="bold" fill="#ff2828" font-family="Liberation Sans">New Node</text>
<text x="1348.6" y="503.2" text-anchor="middle" font-size="8.8" font-weight="bold" fill="#ff2828" font-family="Liberation Sans">CAN-1</text>
</svg>
<svg class="a" style="left:310.5px;top:234.5px;overflow:visible" width="74.1" height="20" viewBox="0 0 74.1 20">
<defs><filter id="shdata" x="-20%" y="-30%" width="140%" height="160%"><feDropShadow dx="0.8" dy="1" stdDeviation="0.8" flood-color="#000" flood-opacity="0.35"/></filter></defs>
<g filter="url(#shdata)">
<text x="1.5" y="15.8" font-family="Liberation Sans" font-weight="bold" font-size="15" fill="#fff" stroke="#f00" stroke-width="3.2" stroke-linejoin="round" paint-order="stroke">data</text>
<path transform="translate(35.7,2.85) scale(0.894)" d="M8 0.3 L8.8 2 M1.8 5 V2.8 H14.2 V5 M6.2 3.8 L3.8 6.8 M9.8 3.8 L12.5 6.8 M3 8 H13 V15.2 H3 Z M7.5 8.2 L5.2 10.5 M6 10.5 H10.5 L6.5 14 M8.2 11.8 L11 13.5" fill="none" stroke="#f00" stroke-width="5.59" stroke-linejoin="round" stroke-linecap="round"/>
<path transform="translate(35.7,2.85) scale(0.894)" d="M8 0.3 L8.8 2 M1.8 5 V2.8 H14.2 V5 M6.2 3.8 L3.8 6.8 M9.8 3.8 L12.5 6.8 M3 8 H13 V15.2 H3 Z M7.5 8.2 L5.2 10.5 M6 10.5 H10.5 L6.5 14 M8.2 11.8 L11 13.5" fill="none" stroke="#fff" stroke-width="1.34" stroke-linejoin="round" stroke-linecap="round"/>
<path transform="translate(52.5,2.85) scale(0.894)" d="M2.5 2.5 H13.5 V14 H2.5 Z" fill="none" stroke="#f00" stroke-width="5.59" stroke-linejoin="round" stroke-linecap="round"/>
<path transform="translate(52.5,2.85) scale(0.894)" d="M2.5 2.5 H13.5 V14 H2.5 Z" fill="none" stroke="#fff" stroke-width="1.34" stroke-linejoin="round" stroke-linecap="round"/>
</g></svg>
<svg class="a" style="left:828.5px;top:225.5px;overflow:visible" width="76.0" height="20" viewBox="0 0 76.0 20">
<defs><filter id="shx" x="-20%" y="-30%" width="140%" height="160%"><feDropShadow dx="0.8" dy="1" stdDeviation="0.8" flood-color="#000" flood-opacity="0.35"/></filter></defs>
<g filter="url(#shx)">
<path transform="translate(1.2,2.50) scale(0.938)" d="M4.5 0.8 L1.8 5 H4.8 L1.2 9.5 L5.5 8.6 M1 13.6 L5.8 11.8 M10.5 0.8 L6.5 5 M10.5 0.8 L15 5 M8.2 6 H12.8 M6.5 8.6 H15.2 M9.8 8.6 L7 13.6 H14 M12 11.2 L14.8 14.8" fill="none" stroke="#f00" stroke-width="5.33" stroke-linejoin="round" stroke-linecap="round"/>
<path transform="translate(1.2,2.50) scale(0.938)" d="M4.5 0.8 L1.8 5 H4.8 L1.2 9.5 L5.5 8.6 M1 13.6 L5.8 11.8 M10.5 0.8 L6.5 5 M10.5 0.8 L15 5 M8.2 6 H12.8 M6.5 8.6 H15.2 M9.8 8.6 L7 13.6 H14 M12 11.2 L14.8 14.8" fill="none" stroke="#fff" stroke-width="1.28" stroke-linejoin="round" stroke-linecap="round"/>
<path transform="translate(18.7,2.50) scale(0.938)" d="M1.5 1.5 H14.5 V15 H1.5 Z M6.2 3 L4 6 M6 4 H11 L4.5 10 M7.5 6.5 L11.8 9.2 M6.8 11 L9.2 12 M5.8 13 L10.2 13.8" fill="none" stroke="#f00" stroke-width="5.33" stroke-linejoin="round" stroke-linecap="round"/>
<path transform="translate(18.7,2.50) scale(0.938)" d="M1.5 1.5 H14.5 V15 H1.5 Z M6.2 3 L4 6 M6 4 H11 L4.5 10 M7.5 6.5 L11.8 9.2 M6.8 11 L9.2 12 M5.8 13 L10.2 13.8" fill="none" stroke="#fff" stroke-width="1.28" stroke-linejoin="round" stroke-linecap="round"/>
<path transform="translate(36.2,2.50) scale(0.938)" d="M8 0.3 L8.8 2 M1.8 5 V2.8 H14.2 V5 M6.2 3.8 L3.8 6.8 M9.8 3.8 L12.5 6.8 M3 8 H13 V15.2 H3 Z M7.5 8.2 L5.2 10.5 M6 10.5 H10.5 L6.5 14 M8.2 11.8 L11 13.5" fill="none" stroke="#f00" stroke-width="5.33" stroke-linejoin="round" stroke-linecap="round"/>
<path transform="translate(36.2,2.50) scale(0.938)" d="M8 0.3 L8.8 2 M1.8 5 V2.8 H14.2 V5 M6.2 3.8 L3.8 6.8 M9.8 3.8 L12.5 6.8 M3 8 H13 V15.2 H3 Z M7.5 8.2 L5.2 10.5 M6 10.5 H10.5 L6.5 14 M8.2 11.8 L11 13.5" fill="none" stroke="#fff" stroke-width="1.28" stroke-linejoin="round" stroke-linecap="round"/>
<path transform="translate(53.7,2.50) scale(0.938)" d="M2.5 2.5 H13.5 V14 H2.5 Z" fill="none" stroke="#f00" stroke-width="5.33" stroke-linejoin="round" stroke-linecap="round"/>
<path transform="translate(53.7,2.50) scale(0.938)" d="M2.5 2.5 H13.5 V14 H2.5 Z" fill="none" stroke="#fff" stroke-width="1.28" stroke-linejoin="round" stroke-linecap="round"/>
</g></svg>
<svg class="a" style="left:330.5px;top:489px;overflow:visible" width="78.5" height="18.5" viewBox="0 0 78.5 18.5">
<defs><filter id="shtrace" x="-20%" y="-30%" width="140%" height="160%"><feDropShadow dx="0.8" dy="1" stdDeviation="0.8" flood-color="#000" flood-opacity="0.35"/></filter></defs>
<g filter="url(#shtrace)">
<text x="1.5" y="14.3" font-family="Liberation Sans" font-weight="bold" font-size="15" fill="#fff" stroke="#f00" stroke-width="3.2" stroke-linejoin="round" paint-order="stroke">trace</text>
<path transform="translate(40.7,2.25) scale(0.875)" d="M8 0.3 L8.8 2 M1.8 5 V2.8 H14.2 V5 M6.2 3.8 L3.8 6.8 M9.8 3.8 L12.5 6.8 M3 8 H13 V15.2 H3 Z M7.5 8.2 L5.2 10.5 M6 10.5 H10.5 L6.5 14 M8.2 11.8 L11 13.5" fill="none" stroke="#f00" stroke-width="5.71" stroke-linejoin="round" stroke-linecap="round"/>
<path transform="translate(40.7,2.25) scale(0.875)" d="M8 0.3 L8.8 2 M1.8 5 V2.8 H14.2 V5 M6.2 3.8 L3.8 6.8 M9.8 3.8 L12.5 6.8 M3 8 H13 V15.2 H3 Z M7.5 8.2 L5.2 10.5 M6 10.5 H10.5 L6.5 14 M8.2 11.8 L11 13.5" fill="none" stroke="#fff" stroke-width="1.37" stroke-linejoin="round" stroke-linecap="round"/>
<path transform="translate(57.2,2.25) scale(0.875)" d="M2.5 2.5 H13.5 V14 H2.5 Z" fill="none" stroke="#f00" stroke-width="5.71" stroke-linejoin="round" stroke-linecap="round"/>
<path transform="translate(57.2,2.25) scale(0.875)" d="M2.5 2.5 H13.5 V14 H2.5 Z" fill="none" stroke="#fff" stroke-width="1.37" stroke-linejoin="round" stroke-linecap="round"/>
</g></svg>
<svg class="a" style="left:931px;top:578px;overflow:visible" width="110.9" height="20" viewBox="0 0 110.9 20">
<defs><filter id="shECU" x="-20%" y="-30%" width="140%" height="160%"><feDropShadow dx="0.8" dy="1" stdDeviation="0.8" flood-color="#000" flood-opacity="0.35"/></filter></defs>
<g filter="url(#shECU)">
<text x="1.5" y="15.8" font-family="Liberation Sans" font-weight="bold" font-size="15" fill="#fff" stroke="#f00" stroke-width="3.2" stroke-linejoin="round" paint-order="stroke">ECU</text>
<path transform="translate(35.7,2.45) scale(0.944)" d="M5 0.8 L1.2 7 M3.5 5 V15.2 M10.5 0.8 L11.2 3 M6.5 4 H15.2 M9 4 Q9 10.5 6.2 14.8 M9 8 H13.5 Q13.5 14.2 11.5 14.6" fill="none" stroke="#f00" stroke-width="5.30" stroke-linejoin="round" stroke-linecap="round"/>
<path transform="translate(35.7,2.45) scale(0.944)" d="M5 0.8 L1.2 7 M3.5 5 V15.2 M10.5 0.8 L11.2 3 M6.5 4 H15.2 M9 4 Q9 10.5 6.2 14.8 M9 8 H13.5 Q13.5 14.2 11.5 14.6" fill="none" stroke="#fff" stroke-width="1.27" stroke-linejoin="round" stroke-linecap="round"/>
<path transform="translate(53.300000000000004,2.45) scale(0.944)" d="M8 0.3 V3.2 M2.8 2.4 H13.2 M5 4.2 H11 V11 H5 Z M5 6.5 H11 M5 8.8 H11 M1.5 12 H14.5 M6 13.2 L3 15.5 M10 13.2 L13 15.5" fill="none" stroke="#f00" stroke-width="5.30" stroke-linejoin="round" stroke-linecap="round"/>
<path transform="translate(53.300000000000004,2.45) scale(0.944)" d="M8 0.3 V3.2 M2.8 2.4 H13.2 M5 4.2 H11 V11 H5 Z M5 6.5 H11 M5 8.8 H11 M1.5 12 H14.5 M6 13.2 L3 15.5 M10 13.2 L13 15.5" fill="none" stroke="#fff" stroke-width="1.27" stroke-linejoin="round" stroke-linecap="round"/>
<path transform="translate(70.9,2.45) scale(0.944)" d="M8 0.3 L8.8 2 M1.8 5 V2.8 H14.2 V5 M6.2 3.8 L3.8 6.8 M9.8 3.8 L12.5 6.8 M3 8 H13 V15.2 H3 Z M7.5 8.2 L5.2 10.5 M6 10.5 H10.5 L6.5 14 M8.2 11.8 L11 13.5" fill="none" stroke="#f00" stroke-width="5.30" stroke-linejoin="round" stroke-linecap="round"/>
<path transform="translate(70.9,2.45) scale(0.944)" d="M8 0.3 L8.8 2 M1.8 5 V2.8 H14.2 V5 M6.2 3.8 L3.8 6.8 M9.8 3.8 L12.5 6.8 M3 8 H13 V15.2 H3 Z M7.5 8.2 L5.2 10.5 M6 10.5 H10.5 L6.5 14 M8.2 11.8 L11 13.5" fill="none" stroke="#fff" stroke-width="1.27" stroke-linejoin="round" stroke-linecap="round"/>
<path transform="translate(88.50000000000001,2.45) scale(0.944)" d="M2.5 2.5 H13.5 V14 H2.5 Z" fill="none" stroke="#f00" stroke-width="5.30" stroke-linejoin="round" stroke-linecap="round"/>
<path transform="translate(88.50000000000001,2.45) scale(0.944)" d="M2.5 2.5 H13.5 V14 H2.5 Z" fill="none" stroke="#fff" stroke-width="1.27" stroke-linejoin="round" stroke-linecap="round"/>
</g></svg><!-- tab bar -->
<div class="a" style="left:134px;top:720.5px;width:1261px;height:23px;background:#efefef"></div>
<div class="a" style="left:133px;top:723.3px;width:64.7px;height:19.8px;background:#3b7ff5;border-bottom:1px solid #2a5ab0"></div>
<div class="t" style="left:146px;top:729px;font-size:8.2px;color:#1a2540;letter-spacing:-0.3px">+ NewPage</div>
<svg class="a" style="left:197.7px;top:721px" width="57" height="24" viewBox="0 0 57 24"><path d="M0 0.5 H55.5 L48 22.3 H0 Z" fill="#efe6e0" stroke="#b8b0aa" stroke-width="0.8"/></svg>
<div class="t" style="left:208px;top:729px;font-size:8.4px;color:#333;letter-spacing:-0.2px">Page 1</div>
<div class="a" style="left:245.5px;top:743px;width:1150px;height:2px;background:#2c3c44"></div>


</body></html>
